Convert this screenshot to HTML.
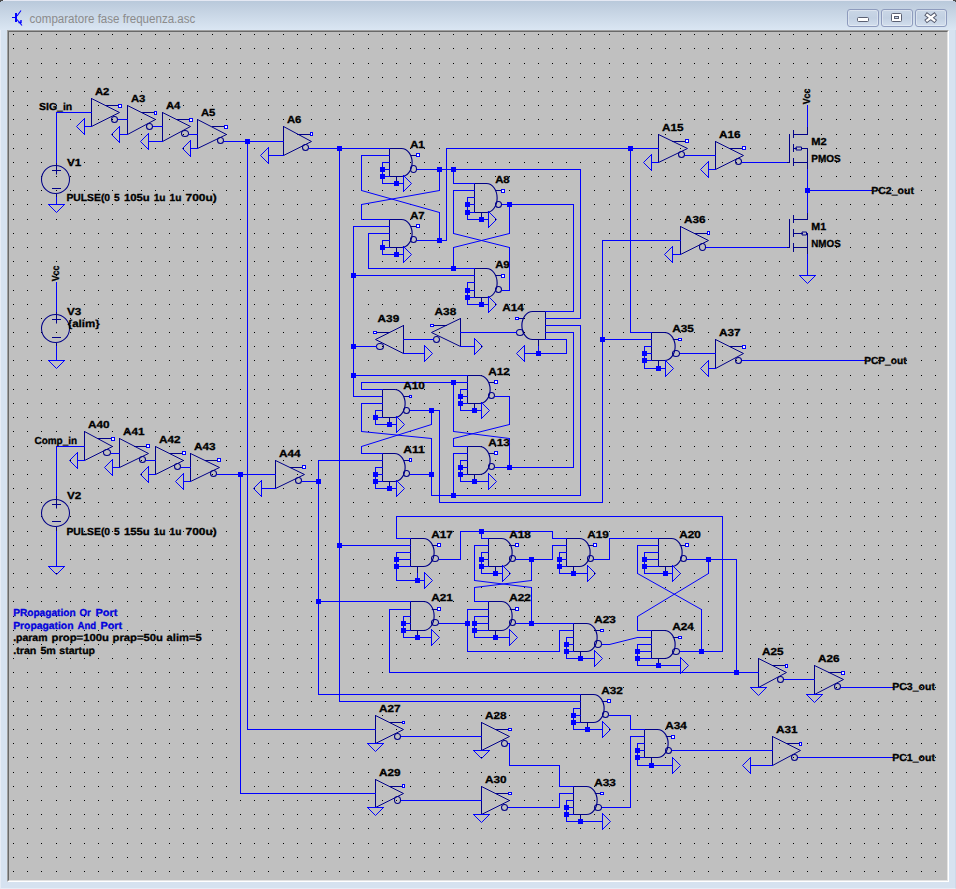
<!DOCTYPE html>
<html><head><meta charset="utf-8"><title>comparatore fase frequenza.asc</title>
<style>
html,body{margin:0;padding:0;background:#d7e3f1;}
body{width:956px;height:889px;position:relative;overflow:hidden;font-family:"Liberation Sans",sans-serif;}
#frame{position:absolute;left:0;top:0;width:956px;height:889px;background:#d6e2f0;box-sizing:border-box;border-left:1px solid #e6ecf6;border-bottom:1px solid #e6ecf6;border-right:1px solid #cdd9e9;}
#tbar{position:absolute;left:0;top:0;width:956px;height:30px;background:linear-gradient(#e4e8f3 0,#e4e8f3 1px,#b9c9db 1px,#c4d2e2 10px,#d9e5f2 29px,#dbe6f3 30px);}
#canvas{position:absolute;left:7px;top:30px;width:942px;height:852px;background:#c0c0c0;box-sizing:border-box;border-left:1px solid #a0a0a0;border-top:1px solid #a0a0a0;border-right:1px solid #fff;border-bottom:1px solid #fff;}
#canvas i{position:absolute;left:0;top:0;right:0;bottom:0;border-left:1px solid #696969;border-top:1px solid #696969;border-right:1px solid #e3e3e3;border-bottom:1px solid #e3e3e3;}
#title{position:absolute;left:29.6px;top:9px;font-size:12px;color:#8b8b8b;white-space:nowrap;line-height:17px;}
.btn{position:absolute;top:9px;width:32px;height:18px;box-sizing:border-box;border:1px solid #8e9bbd;border-radius:3px;background:linear-gradient(#c9d6e6,#c2d0e2 50%,#d2deed);box-shadow:inset 0 0 0 1px rgba(255,255,255,.35);}
</style></head><body>
<div id="frame"></div>
<div id="tbar"></div>
<div id="canvas"><i></i></div>
<div class="btn" style="left:847px"></div>
<div class="btn" style="left:881px"></div>
<div class="btn" style="left:915px"></div>
<svg width="956" height="889" viewBox="0 0 956 889" style="position:absolute;left:0;top:0">
<path d="M13 34h1M27 34h1M41 34h1M56 34h1M70 34h1M84 34h1M98 34h1M112 34h1M127 34h1M141 34h1M155 34h1M169 34h1M183 34h1M197 34h1M212 34h1M226 34h1M240 34h1M254 34h1M268 34h1M283 34h1M297 34h1M311 34h1M325 34h1M339 34h1M353 34h1M368 34h1M382 34h1M396 34h1M410 34h1M424 34h1M439 34h1M453 34h1M467 34h1M481 34h1M495 34h1M509 34h1M524 34h1M538 34h1M552 34h1M566 34h1M580 34h1M594 34h1M609 34h1M623 34h1M637 34h1M651 34h1M665 34h1M680 34h1M694 34h1M708 34h1M722 34h1M736 34h1M750 34h1M765 34h1M779 34h1M793 34h1M807 34h1M821 34h1M836 34h1M850 34h1M864 34h1M878 34h1M892 34h1M906 34h1M921 34h1M935 34h1M13 48h1M27 48h1M41 48h1M56 48h1M70 48h1M84 48h1M98 48h1M112 48h1M127 48h1M141 48h1M155 48h1M169 48h1M183 48h1M197 48h1M212 48h1M226 48h1M240 48h1M254 48h1M268 48h1M283 48h1M297 48h1M311 48h1M325 48h1M339 48h1M353 48h1M368 48h1M382 48h1M396 48h1M410 48h1M424 48h1M439 48h1M453 48h1M467 48h1M481 48h1M495 48h1M509 48h1M524 48h1M538 48h1M552 48h1M566 48h1M580 48h1M594 48h1M609 48h1M623 48h1M637 48h1M651 48h1M665 48h1M680 48h1M694 48h1M708 48h1M722 48h1M736 48h1M750 48h1M765 48h1M779 48h1M793 48h1M807 48h1M821 48h1M836 48h1M850 48h1M864 48h1M878 48h1M892 48h1M906 48h1M921 48h1M935 48h1M13 63h1M27 63h1M41 63h1M56 63h1M70 63h1M84 63h1M98 63h1M112 63h1M127 63h1M141 63h1M155 63h1M169 63h1M183 63h1M197 63h1M212 63h1M226 63h1M240 63h1M254 63h1M268 63h1M283 63h1M297 63h1M311 63h1M325 63h1M339 63h1M353 63h1M368 63h1M382 63h1M396 63h1M410 63h1M424 63h1M439 63h1M453 63h1M467 63h1M481 63h1M495 63h1M509 63h1M524 63h1M538 63h1M552 63h1M566 63h1M580 63h1M594 63h1M609 63h1M623 63h1M637 63h1M651 63h1M665 63h1M680 63h1M694 63h1M708 63h1M722 63h1M736 63h1M750 63h1M765 63h1M779 63h1M793 63h1M807 63h1M821 63h1M836 63h1M850 63h1M864 63h1M878 63h1M892 63h1M906 63h1M921 63h1M935 63h1M13 77h1M27 77h1M41 77h1M56 77h1M70 77h1M84 77h1M98 77h1M112 77h1M127 77h1M141 77h1M155 77h1M169 77h1M183 77h1M197 77h1M212 77h1M226 77h1M240 77h1M254 77h1M268 77h1M283 77h1M297 77h1M311 77h1M325 77h1M339 77h1M353 77h1M368 77h1M382 77h1M396 77h1M410 77h1M424 77h1M439 77h1M453 77h1M467 77h1M481 77h1M495 77h1M509 77h1M524 77h1M538 77h1M552 77h1M566 77h1M580 77h1M594 77h1M609 77h1M623 77h1M637 77h1M651 77h1M665 77h1M680 77h1M694 77h1M708 77h1M722 77h1M736 77h1M750 77h1M765 77h1M779 77h1M793 77h1M807 77h1M821 77h1M836 77h1M850 77h1M864 77h1M878 77h1M892 77h1M906 77h1M921 77h1M935 77h1M13 91h1M27 91h1M41 91h1M56 91h1M70 91h1M84 91h1M98 91h1M112 91h1M127 91h1M141 91h1M155 91h1M169 91h1M183 91h1M197 91h1M212 91h1M226 91h1M240 91h1M254 91h1M268 91h1M283 91h1M297 91h1M311 91h1M325 91h1M339 91h1M353 91h1M368 91h1M382 91h1M396 91h1M410 91h1M424 91h1M439 91h1M453 91h1M467 91h1M481 91h1M495 91h1M509 91h1M524 91h1M538 91h1M552 91h1M566 91h1M580 91h1M594 91h1M609 91h1M623 91h1M637 91h1M651 91h1M665 91h1M680 91h1M694 91h1M708 91h1M722 91h1M736 91h1M750 91h1M765 91h1M779 91h1M793 91h1M807 91h1M821 91h1M836 91h1M850 91h1M864 91h1M878 91h1M892 91h1M906 91h1M921 91h1M935 91h1M13 105h1M27 105h1M41 105h1M56 105h1M70 105h1M84 105h1M98 105h1M112 105h1M127 105h1M141 105h1M155 105h1M169 105h1M183 105h1M197 105h1M212 105h1M226 105h1M240 105h1M254 105h1M268 105h1M283 105h1M297 105h1M311 105h1M325 105h1M339 105h1M353 105h1M368 105h1M382 105h1M396 105h1M410 105h1M424 105h1M439 105h1M453 105h1M467 105h1M481 105h1M495 105h1M509 105h1M524 105h1M538 105h1M552 105h1M566 105h1M580 105h1M594 105h1M609 105h1M623 105h1M637 105h1M651 105h1M665 105h1M680 105h1M694 105h1M708 105h1M722 105h1M736 105h1M750 105h1M765 105h1M779 105h1M793 105h1M807 105h1M821 105h1M836 105h1M850 105h1M864 105h1M878 105h1M892 105h1M906 105h1M921 105h1M935 105h1M13 119h1M27 119h1M41 119h1M56 119h1M70 119h1M84 119h1M98 119h1M112 119h1M127 119h1M141 119h1M155 119h1M169 119h1M183 119h1M197 119h1M212 119h1M226 119h1M240 119h1M254 119h1M268 119h1M283 119h1M297 119h1M311 119h1M325 119h1M339 119h1M353 119h1M368 119h1M382 119h1M396 119h1M410 119h1M424 119h1M439 119h1M453 119h1M467 119h1M481 119h1M495 119h1M509 119h1M524 119h1M538 119h1M552 119h1M566 119h1M580 119h1M594 119h1M609 119h1M623 119h1M637 119h1M651 119h1M665 119h1M680 119h1M694 119h1M708 119h1M722 119h1M736 119h1M750 119h1M765 119h1M779 119h1M793 119h1M807 119h1M821 119h1M836 119h1M850 119h1M864 119h1M878 119h1M892 119h1M906 119h1M921 119h1M935 119h1M13 134h1M27 134h1M41 134h1M56 134h1M70 134h1M84 134h1M98 134h1M112 134h1M127 134h1M141 134h1M155 134h1M169 134h1M183 134h1M197 134h1M212 134h1M226 134h1M240 134h1M254 134h1M268 134h1M283 134h1M297 134h1M311 134h1M325 134h1M339 134h1M353 134h1M368 134h1M382 134h1M396 134h1M410 134h1M424 134h1M439 134h1M453 134h1M467 134h1M481 134h1M495 134h1M509 134h1M524 134h1M538 134h1M552 134h1M566 134h1M580 134h1M594 134h1M609 134h1M623 134h1M637 134h1M651 134h1M665 134h1M680 134h1M694 134h1M708 134h1M722 134h1M736 134h1M750 134h1M765 134h1M779 134h1M793 134h1M807 134h1M821 134h1M836 134h1M850 134h1M864 134h1M878 134h1M892 134h1M906 134h1M921 134h1M935 134h1M13 148h1M27 148h1M41 148h1M56 148h1M70 148h1M84 148h1M98 148h1M112 148h1M127 148h1M141 148h1M155 148h1M169 148h1M183 148h1M197 148h1M212 148h1M226 148h1M240 148h1M254 148h1M268 148h1M283 148h1M297 148h1M311 148h1M325 148h1M339 148h1M353 148h1M368 148h1M382 148h1M396 148h1M410 148h1M424 148h1M439 148h1M453 148h1M467 148h1M481 148h1M495 148h1M509 148h1M524 148h1M538 148h1M552 148h1M566 148h1M580 148h1M594 148h1M609 148h1M623 148h1M637 148h1M651 148h1M665 148h1M680 148h1M694 148h1M708 148h1M722 148h1M736 148h1M750 148h1M765 148h1M779 148h1M793 148h1M807 148h1M821 148h1M836 148h1M850 148h1M864 148h1M878 148h1M892 148h1M906 148h1M921 148h1M935 148h1M13 162h1M27 162h1M41 162h1M56 162h1M70 162h1M84 162h1M98 162h1M112 162h1M127 162h1M141 162h1M155 162h1M169 162h1M183 162h1M197 162h1M212 162h1M226 162h1M240 162h1M254 162h1M268 162h1M283 162h1M297 162h1M311 162h1M325 162h1M339 162h1M353 162h1M368 162h1M382 162h1M396 162h1M410 162h1M424 162h1M439 162h1M453 162h1M467 162h1M481 162h1M495 162h1M509 162h1M524 162h1M538 162h1M552 162h1M566 162h1M580 162h1M594 162h1M609 162h1M623 162h1M637 162h1M651 162h1M665 162h1M680 162h1M694 162h1M708 162h1M722 162h1M736 162h1M750 162h1M765 162h1M779 162h1M793 162h1M807 162h1M821 162h1M836 162h1M850 162h1M864 162h1M878 162h1M892 162h1M906 162h1M921 162h1M935 162h1M13 176h1M27 176h1M41 176h1M56 176h1M70 176h1M84 176h1M98 176h1M112 176h1M127 176h1M141 176h1M155 176h1M169 176h1M183 176h1M197 176h1M212 176h1M226 176h1M240 176h1M254 176h1M268 176h1M283 176h1M297 176h1M311 176h1M325 176h1M339 176h1M353 176h1M368 176h1M382 176h1M396 176h1M410 176h1M424 176h1M439 176h1M453 176h1M467 176h1M481 176h1M495 176h1M509 176h1M524 176h1M538 176h1M552 176h1M566 176h1M580 176h1M594 176h1M609 176h1M623 176h1M637 176h1M651 176h1M665 176h1M680 176h1M694 176h1M708 176h1M722 176h1M736 176h1M750 176h1M765 176h1M779 176h1M793 176h1M807 176h1M821 176h1M836 176h1M850 176h1M864 176h1M878 176h1M892 176h1M906 176h1M921 176h1M935 176h1M13 190h1M27 190h1M41 190h1M56 190h1M70 190h1M84 190h1M98 190h1M112 190h1M127 190h1M141 190h1M155 190h1M169 190h1M183 190h1M197 190h1M212 190h1M226 190h1M240 190h1M254 190h1M268 190h1M283 190h1M297 190h1M311 190h1M325 190h1M339 190h1M353 190h1M368 190h1M382 190h1M396 190h1M410 190h1M424 190h1M439 190h1M453 190h1M467 190h1M481 190h1M495 190h1M509 190h1M524 190h1M538 190h1M552 190h1M566 190h1M580 190h1M594 190h1M609 190h1M623 190h1M637 190h1M651 190h1M665 190h1M680 190h1M694 190h1M708 190h1M722 190h1M736 190h1M750 190h1M765 190h1M779 190h1M793 190h1M807 190h1M821 190h1M836 190h1M850 190h1M864 190h1M878 190h1M892 190h1M906 190h1M921 190h1M935 190h1M13 204h1M27 204h1M41 204h1M56 204h1M70 204h1M84 204h1M98 204h1M112 204h1M127 204h1M141 204h1M155 204h1M169 204h1M183 204h1M197 204h1M212 204h1M226 204h1M240 204h1M254 204h1M268 204h1M283 204h1M297 204h1M311 204h1M325 204h1M339 204h1M353 204h1M368 204h1M382 204h1M396 204h1M410 204h1M424 204h1M439 204h1M453 204h1M467 204h1M481 204h1M495 204h1M509 204h1M524 204h1M538 204h1M552 204h1M566 204h1M580 204h1M594 204h1M609 204h1M623 204h1M637 204h1M651 204h1M665 204h1M680 204h1M694 204h1M708 204h1M722 204h1M736 204h1M750 204h1M765 204h1M779 204h1M793 204h1M807 204h1M821 204h1M836 204h1M850 204h1M864 204h1M878 204h1M892 204h1M906 204h1M921 204h1M935 204h1M13 219h1M27 219h1M41 219h1M56 219h1M70 219h1M84 219h1M98 219h1M112 219h1M127 219h1M141 219h1M155 219h1M169 219h1M183 219h1M197 219h1M212 219h1M226 219h1M240 219h1M254 219h1M268 219h1M283 219h1M297 219h1M311 219h1M325 219h1M339 219h1M353 219h1M368 219h1M382 219h1M396 219h1M410 219h1M424 219h1M439 219h1M453 219h1M467 219h1M481 219h1M495 219h1M509 219h1M524 219h1M538 219h1M552 219h1M566 219h1M580 219h1M594 219h1M609 219h1M623 219h1M637 219h1M651 219h1M665 219h1M680 219h1M694 219h1M708 219h1M722 219h1M736 219h1M750 219h1M765 219h1M779 219h1M793 219h1M807 219h1M821 219h1M836 219h1M850 219h1M864 219h1M878 219h1M892 219h1M906 219h1M921 219h1M935 219h1M13 233h1M27 233h1M41 233h1M56 233h1M70 233h1M84 233h1M98 233h1M112 233h1M127 233h1M141 233h1M155 233h1M169 233h1M183 233h1M197 233h1M212 233h1M226 233h1M240 233h1M254 233h1M268 233h1M283 233h1M297 233h1M311 233h1M325 233h1M339 233h1M353 233h1M368 233h1M382 233h1M396 233h1M410 233h1M424 233h1M439 233h1M453 233h1M467 233h1M481 233h1M495 233h1M509 233h1M524 233h1M538 233h1M552 233h1M566 233h1M580 233h1M594 233h1M609 233h1M623 233h1M637 233h1M651 233h1M665 233h1M680 233h1M694 233h1M708 233h1M722 233h1M736 233h1M750 233h1M765 233h1M779 233h1M793 233h1M807 233h1M821 233h1M836 233h1M850 233h1M864 233h1M878 233h1M892 233h1M906 233h1M921 233h1M935 233h1M13 247h1M27 247h1M41 247h1M56 247h1M70 247h1M84 247h1M98 247h1M112 247h1M127 247h1M141 247h1M155 247h1M169 247h1M183 247h1M197 247h1M212 247h1M226 247h1M240 247h1M254 247h1M268 247h1M283 247h1M297 247h1M311 247h1M325 247h1M339 247h1M353 247h1M368 247h1M382 247h1M396 247h1M410 247h1M424 247h1M439 247h1M453 247h1M467 247h1M481 247h1M495 247h1M509 247h1M524 247h1M538 247h1M552 247h1M566 247h1M580 247h1M594 247h1M609 247h1M623 247h1M637 247h1M651 247h1M665 247h1M680 247h1M694 247h1M708 247h1M722 247h1M736 247h1M750 247h1M765 247h1M779 247h1M793 247h1M807 247h1M821 247h1M836 247h1M850 247h1M864 247h1M878 247h1M892 247h1M906 247h1M921 247h1M935 247h1M13 261h1M27 261h1M41 261h1M56 261h1M70 261h1M84 261h1M98 261h1M112 261h1M127 261h1M141 261h1M155 261h1M169 261h1M183 261h1M197 261h1M212 261h1M226 261h1M240 261h1M254 261h1M268 261h1M283 261h1M297 261h1M311 261h1M325 261h1M339 261h1M353 261h1M368 261h1M382 261h1M396 261h1M410 261h1M424 261h1M439 261h1M453 261h1M467 261h1M481 261h1M495 261h1M509 261h1M524 261h1M538 261h1M552 261h1M566 261h1M580 261h1M594 261h1M609 261h1M623 261h1M637 261h1M651 261h1M665 261h1M680 261h1M694 261h1M708 261h1M722 261h1M736 261h1M750 261h1M765 261h1M779 261h1M793 261h1M807 261h1M821 261h1M836 261h1M850 261h1M864 261h1M878 261h1M892 261h1M906 261h1M921 261h1M935 261h1M13 275h1M27 275h1M41 275h1M56 275h1M70 275h1M84 275h1M98 275h1M112 275h1M127 275h1M141 275h1M155 275h1M169 275h1M183 275h1M197 275h1M212 275h1M226 275h1M240 275h1M254 275h1M268 275h1M283 275h1M297 275h1M311 275h1M325 275h1M339 275h1M353 275h1M368 275h1M382 275h1M396 275h1M410 275h1M424 275h1M439 275h1M453 275h1M467 275h1M481 275h1M495 275h1M509 275h1M524 275h1M538 275h1M552 275h1M566 275h1M580 275h1M594 275h1M609 275h1M623 275h1M637 275h1M651 275h1M665 275h1M680 275h1M694 275h1M708 275h1M722 275h1M736 275h1M750 275h1M765 275h1M779 275h1M793 275h1M807 275h1M821 275h1M836 275h1M850 275h1M864 275h1M878 275h1M892 275h1M906 275h1M921 275h1M935 275h1M13 290h1M27 290h1M41 290h1M56 290h1M70 290h1M84 290h1M98 290h1M112 290h1M127 290h1M141 290h1M155 290h1M169 290h1M183 290h1M197 290h1M212 290h1M226 290h1M240 290h1M254 290h1M268 290h1M283 290h1M297 290h1M311 290h1M325 290h1M339 290h1M353 290h1M368 290h1M382 290h1M396 290h1M410 290h1M424 290h1M439 290h1M453 290h1M467 290h1M481 290h1M495 290h1M509 290h1M524 290h1M538 290h1M552 290h1M566 290h1M580 290h1M594 290h1M609 290h1M623 290h1M637 290h1M651 290h1M665 290h1M680 290h1M694 290h1M708 290h1M722 290h1M736 290h1M750 290h1M765 290h1M779 290h1M793 290h1M807 290h1M821 290h1M836 290h1M850 290h1M864 290h1M878 290h1M892 290h1M906 290h1M921 290h1M935 290h1M13 304h1M27 304h1M41 304h1M56 304h1M70 304h1M84 304h1M98 304h1M112 304h1M127 304h1M141 304h1M155 304h1M169 304h1M183 304h1M197 304h1M212 304h1M226 304h1M240 304h1M254 304h1M268 304h1M283 304h1M297 304h1M311 304h1M325 304h1M339 304h1M353 304h1M368 304h1M382 304h1M396 304h1M410 304h1M424 304h1M439 304h1M453 304h1M467 304h1M481 304h1M495 304h1M509 304h1M524 304h1M538 304h1M552 304h1M566 304h1M580 304h1M594 304h1M609 304h1M623 304h1M637 304h1M651 304h1M665 304h1M680 304h1M694 304h1M708 304h1M722 304h1M736 304h1M750 304h1M765 304h1M779 304h1M793 304h1M807 304h1M821 304h1M836 304h1M850 304h1M864 304h1M878 304h1M892 304h1M906 304h1M921 304h1M935 304h1M13 318h1M27 318h1M41 318h1M56 318h1M70 318h1M84 318h1M98 318h1M112 318h1M127 318h1M141 318h1M155 318h1M169 318h1M183 318h1M197 318h1M212 318h1M226 318h1M240 318h1M254 318h1M268 318h1M283 318h1M297 318h1M311 318h1M325 318h1M339 318h1M353 318h1M368 318h1M382 318h1M396 318h1M410 318h1M424 318h1M439 318h1M453 318h1M467 318h1M481 318h1M495 318h1M509 318h1M524 318h1M538 318h1M552 318h1M566 318h1M580 318h1M594 318h1M609 318h1M623 318h1M637 318h1M651 318h1M665 318h1M680 318h1M694 318h1M708 318h1M722 318h1M736 318h1M750 318h1M765 318h1M779 318h1M793 318h1M807 318h1M821 318h1M836 318h1M850 318h1M864 318h1M878 318h1M892 318h1M906 318h1M921 318h1M935 318h1M13 332h1M27 332h1M41 332h1M56 332h1M70 332h1M84 332h1M98 332h1M112 332h1M127 332h1M141 332h1M155 332h1M169 332h1M183 332h1M197 332h1M212 332h1M226 332h1M240 332h1M254 332h1M268 332h1M283 332h1M297 332h1M311 332h1M325 332h1M339 332h1M353 332h1M368 332h1M382 332h1M396 332h1M410 332h1M424 332h1M439 332h1M453 332h1M467 332h1M481 332h1M495 332h1M509 332h1M524 332h1M538 332h1M552 332h1M566 332h1M580 332h1M594 332h1M609 332h1M623 332h1M637 332h1M651 332h1M665 332h1M680 332h1M694 332h1M708 332h1M722 332h1M736 332h1M750 332h1M765 332h1M779 332h1M793 332h1M807 332h1M821 332h1M836 332h1M850 332h1M864 332h1M878 332h1M892 332h1M906 332h1M921 332h1M935 332h1M13 346h1M27 346h1M41 346h1M56 346h1M70 346h1M84 346h1M98 346h1M112 346h1M127 346h1M141 346h1M155 346h1M169 346h1M183 346h1M197 346h1M212 346h1M226 346h1M240 346h1M254 346h1M268 346h1M283 346h1M297 346h1M311 346h1M325 346h1M339 346h1M353 346h1M368 346h1M382 346h1M396 346h1M410 346h1M424 346h1M439 346h1M453 346h1M467 346h1M481 346h1M495 346h1M509 346h1M524 346h1M538 346h1M552 346h1M566 346h1M580 346h1M594 346h1M609 346h1M623 346h1M637 346h1M651 346h1M665 346h1M680 346h1M694 346h1M708 346h1M722 346h1M736 346h1M750 346h1M765 346h1M779 346h1M793 346h1M807 346h1M821 346h1M836 346h1M850 346h1M864 346h1M878 346h1M892 346h1M906 346h1M921 346h1M935 346h1M13 360h1M27 360h1M41 360h1M56 360h1M70 360h1M84 360h1M98 360h1M112 360h1M127 360h1M141 360h1M155 360h1M169 360h1M183 360h1M197 360h1M212 360h1M226 360h1M240 360h1M254 360h1M268 360h1M283 360h1M297 360h1M311 360h1M325 360h1M339 360h1M353 360h1M368 360h1M382 360h1M396 360h1M410 360h1M424 360h1M439 360h1M453 360h1M467 360h1M481 360h1M495 360h1M509 360h1M524 360h1M538 360h1M552 360h1M566 360h1M580 360h1M594 360h1M609 360h1M623 360h1M637 360h1M651 360h1M665 360h1M680 360h1M694 360h1M708 360h1M722 360h1M736 360h1M750 360h1M765 360h1M779 360h1M793 360h1M807 360h1M821 360h1M836 360h1M850 360h1M864 360h1M878 360h1M892 360h1M906 360h1M921 360h1M935 360h1M13 375h1M27 375h1M41 375h1M56 375h1M70 375h1M84 375h1M98 375h1M112 375h1M127 375h1M141 375h1M155 375h1M169 375h1M183 375h1M197 375h1M212 375h1M226 375h1M240 375h1M254 375h1M268 375h1M283 375h1M297 375h1M311 375h1M325 375h1M339 375h1M353 375h1M368 375h1M382 375h1M396 375h1M410 375h1M424 375h1M439 375h1M453 375h1M467 375h1M481 375h1M495 375h1M509 375h1M524 375h1M538 375h1M552 375h1M566 375h1M580 375h1M594 375h1M609 375h1M623 375h1M637 375h1M651 375h1M665 375h1M680 375h1M694 375h1M708 375h1M722 375h1M736 375h1M750 375h1M765 375h1M779 375h1M793 375h1M807 375h1M821 375h1M836 375h1M850 375h1M864 375h1M878 375h1M892 375h1M906 375h1M921 375h1M935 375h1M13 389h1M27 389h1M41 389h1M56 389h1M70 389h1M84 389h1M98 389h1M112 389h1M127 389h1M141 389h1M155 389h1M169 389h1M183 389h1M197 389h1M212 389h1M226 389h1M240 389h1M254 389h1M268 389h1M283 389h1M297 389h1M311 389h1M325 389h1M339 389h1M353 389h1M368 389h1M382 389h1M396 389h1M410 389h1M424 389h1M439 389h1M453 389h1M467 389h1M481 389h1M495 389h1M509 389h1M524 389h1M538 389h1M552 389h1M566 389h1M580 389h1M594 389h1M609 389h1M623 389h1M637 389h1M651 389h1M665 389h1M680 389h1M694 389h1M708 389h1M722 389h1M736 389h1M750 389h1M765 389h1M779 389h1M793 389h1M807 389h1M821 389h1M836 389h1M850 389h1M864 389h1M878 389h1M892 389h1M906 389h1M921 389h1M935 389h1M13 403h1M27 403h1M41 403h1M56 403h1M70 403h1M84 403h1M98 403h1M112 403h1M127 403h1M141 403h1M155 403h1M169 403h1M183 403h1M197 403h1M212 403h1M226 403h1M240 403h1M254 403h1M268 403h1M283 403h1M297 403h1M311 403h1M325 403h1M339 403h1M353 403h1M368 403h1M382 403h1M396 403h1M410 403h1M424 403h1M439 403h1M453 403h1M467 403h1M481 403h1M495 403h1M509 403h1M524 403h1M538 403h1M552 403h1M566 403h1M580 403h1M594 403h1M609 403h1M623 403h1M637 403h1M651 403h1M665 403h1M680 403h1M694 403h1M708 403h1M722 403h1M736 403h1M750 403h1M765 403h1M779 403h1M793 403h1M807 403h1M821 403h1M836 403h1M850 403h1M864 403h1M878 403h1M892 403h1M906 403h1M921 403h1M935 403h1M13 417h1M27 417h1M41 417h1M56 417h1M70 417h1M84 417h1M98 417h1M112 417h1M127 417h1M141 417h1M155 417h1M169 417h1M183 417h1M197 417h1M212 417h1M226 417h1M240 417h1M254 417h1M268 417h1M283 417h1M297 417h1M311 417h1M325 417h1M339 417h1M353 417h1M368 417h1M382 417h1M396 417h1M410 417h1M424 417h1M439 417h1M453 417h1M467 417h1M481 417h1M495 417h1M509 417h1M524 417h1M538 417h1M552 417h1M566 417h1M580 417h1M594 417h1M609 417h1M623 417h1M637 417h1M651 417h1M665 417h1M680 417h1M694 417h1M708 417h1M722 417h1M736 417h1M750 417h1M765 417h1M779 417h1M793 417h1M807 417h1M821 417h1M836 417h1M850 417h1M864 417h1M878 417h1M892 417h1M906 417h1M921 417h1M935 417h1M13 431h1M27 431h1M41 431h1M56 431h1M70 431h1M84 431h1M98 431h1M112 431h1M127 431h1M141 431h1M155 431h1M169 431h1M183 431h1M197 431h1M212 431h1M226 431h1M240 431h1M254 431h1M268 431h1M283 431h1M297 431h1M311 431h1M325 431h1M339 431h1M353 431h1M368 431h1M382 431h1M396 431h1M410 431h1M424 431h1M439 431h1M453 431h1M467 431h1M481 431h1M495 431h1M509 431h1M524 431h1M538 431h1M552 431h1M566 431h1M580 431h1M594 431h1M609 431h1M623 431h1M637 431h1M651 431h1M665 431h1M680 431h1M694 431h1M708 431h1M722 431h1M736 431h1M750 431h1M765 431h1M779 431h1M793 431h1M807 431h1M821 431h1M836 431h1M850 431h1M864 431h1M878 431h1M892 431h1M906 431h1M921 431h1M935 431h1M13 446h1M27 446h1M41 446h1M56 446h1M70 446h1M84 446h1M98 446h1M112 446h1M127 446h1M141 446h1M155 446h1M169 446h1M183 446h1M197 446h1M212 446h1M226 446h1M240 446h1M254 446h1M268 446h1M283 446h1M297 446h1M311 446h1M325 446h1M339 446h1M353 446h1M368 446h1M382 446h1M396 446h1M410 446h1M424 446h1M439 446h1M453 446h1M467 446h1M481 446h1M495 446h1M509 446h1M524 446h1M538 446h1M552 446h1M566 446h1M580 446h1M594 446h1M609 446h1M623 446h1M637 446h1M651 446h1M665 446h1M680 446h1M694 446h1M708 446h1M722 446h1M736 446h1M750 446h1M765 446h1M779 446h1M793 446h1M807 446h1M821 446h1M836 446h1M850 446h1M864 446h1M878 446h1M892 446h1M906 446h1M921 446h1M935 446h1M13 460h1M27 460h1M41 460h1M56 460h1M70 460h1M84 460h1M98 460h1M112 460h1M127 460h1M141 460h1M155 460h1M169 460h1M183 460h1M197 460h1M212 460h1M226 460h1M240 460h1M254 460h1M268 460h1M283 460h1M297 460h1M311 460h1M325 460h1M339 460h1M353 460h1M368 460h1M382 460h1M396 460h1M410 460h1M424 460h1M439 460h1M453 460h1M467 460h1M481 460h1M495 460h1M509 460h1M524 460h1M538 460h1M552 460h1M566 460h1M580 460h1M594 460h1M609 460h1M623 460h1M637 460h1M651 460h1M665 460h1M680 460h1M694 460h1M708 460h1M722 460h1M736 460h1M750 460h1M765 460h1M779 460h1M793 460h1M807 460h1M821 460h1M836 460h1M850 460h1M864 460h1M878 460h1M892 460h1M906 460h1M921 460h1M935 460h1M13 474h1M27 474h1M41 474h1M56 474h1M70 474h1M84 474h1M98 474h1M112 474h1M127 474h1M141 474h1M155 474h1M169 474h1M183 474h1M197 474h1M212 474h1M226 474h1M240 474h1M254 474h1M268 474h1M283 474h1M297 474h1M311 474h1M325 474h1M339 474h1M353 474h1M368 474h1M382 474h1M396 474h1M410 474h1M424 474h1M439 474h1M453 474h1M467 474h1M481 474h1M495 474h1M509 474h1M524 474h1M538 474h1M552 474h1M566 474h1M580 474h1M594 474h1M609 474h1M623 474h1M637 474h1M651 474h1M665 474h1M680 474h1M694 474h1M708 474h1M722 474h1M736 474h1M750 474h1M765 474h1M779 474h1M793 474h1M807 474h1M821 474h1M836 474h1M850 474h1M864 474h1M878 474h1M892 474h1M906 474h1M921 474h1M935 474h1M13 488h1M27 488h1M41 488h1M56 488h1M70 488h1M84 488h1M98 488h1M112 488h1M127 488h1M141 488h1M155 488h1M169 488h1M183 488h1M197 488h1M212 488h1M226 488h1M240 488h1M254 488h1M268 488h1M283 488h1M297 488h1M311 488h1M325 488h1M339 488h1M353 488h1M368 488h1M382 488h1M396 488h1M410 488h1M424 488h1M439 488h1M453 488h1M467 488h1M481 488h1M495 488h1M509 488h1M524 488h1M538 488h1M552 488h1M566 488h1M580 488h1M594 488h1M609 488h1M623 488h1M637 488h1M651 488h1M665 488h1M680 488h1M694 488h1M708 488h1M722 488h1M736 488h1M750 488h1M765 488h1M779 488h1M793 488h1M807 488h1M821 488h1M836 488h1M850 488h1M864 488h1M878 488h1M892 488h1M906 488h1M921 488h1M935 488h1M13 502h1M27 502h1M41 502h1M56 502h1M70 502h1M84 502h1M98 502h1M112 502h1M127 502h1M141 502h1M155 502h1M169 502h1M183 502h1M197 502h1M212 502h1M226 502h1M240 502h1M254 502h1M268 502h1M283 502h1M297 502h1M311 502h1M325 502h1M339 502h1M353 502h1M368 502h1M382 502h1M396 502h1M410 502h1M424 502h1M439 502h1M453 502h1M467 502h1M481 502h1M495 502h1M509 502h1M524 502h1M538 502h1M552 502h1M566 502h1M580 502h1M594 502h1M609 502h1M623 502h1M637 502h1M651 502h1M665 502h1M680 502h1M694 502h1M708 502h1M722 502h1M736 502h1M750 502h1M765 502h1M779 502h1M793 502h1M807 502h1M821 502h1M836 502h1M850 502h1M864 502h1M878 502h1M892 502h1M906 502h1M921 502h1M935 502h1M13 516h1M27 516h1M41 516h1M56 516h1M70 516h1M84 516h1M98 516h1M112 516h1M127 516h1M141 516h1M155 516h1M169 516h1M183 516h1M197 516h1M212 516h1M226 516h1M240 516h1M254 516h1M268 516h1M283 516h1M297 516h1M311 516h1M325 516h1M339 516h1M353 516h1M368 516h1M382 516h1M396 516h1M410 516h1M424 516h1M439 516h1M453 516h1M467 516h1M481 516h1M495 516h1M509 516h1M524 516h1M538 516h1M552 516h1M566 516h1M580 516h1M594 516h1M609 516h1M623 516h1M637 516h1M651 516h1M665 516h1M680 516h1M694 516h1M708 516h1M722 516h1M736 516h1M750 516h1M765 516h1M779 516h1M793 516h1M807 516h1M821 516h1M836 516h1M850 516h1M864 516h1M878 516h1M892 516h1M906 516h1M921 516h1M935 516h1M13 531h1M27 531h1M41 531h1M56 531h1M70 531h1M84 531h1M98 531h1M112 531h1M127 531h1M141 531h1M155 531h1M169 531h1M183 531h1M197 531h1M212 531h1M226 531h1M240 531h1M254 531h1M268 531h1M283 531h1M297 531h1M311 531h1M325 531h1M339 531h1M353 531h1M368 531h1M382 531h1M396 531h1M410 531h1M424 531h1M439 531h1M453 531h1M467 531h1M481 531h1M495 531h1M509 531h1M524 531h1M538 531h1M552 531h1M566 531h1M580 531h1M594 531h1M609 531h1M623 531h1M637 531h1M651 531h1M665 531h1M680 531h1M694 531h1M708 531h1M722 531h1M736 531h1M750 531h1M765 531h1M779 531h1M793 531h1M807 531h1M821 531h1M836 531h1M850 531h1M864 531h1M878 531h1M892 531h1M906 531h1M921 531h1M935 531h1M13 545h1M27 545h1M41 545h1M56 545h1M70 545h1M84 545h1M98 545h1M112 545h1M127 545h1M141 545h1M155 545h1M169 545h1M183 545h1M197 545h1M212 545h1M226 545h1M240 545h1M254 545h1M268 545h1M283 545h1M297 545h1M311 545h1M325 545h1M339 545h1M353 545h1M368 545h1M382 545h1M396 545h1M410 545h1M424 545h1M439 545h1M453 545h1M467 545h1M481 545h1M495 545h1M509 545h1M524 545h1M538 545h1M552 545h1M566 545h1M580 545h1M594 545h1M609 545h1M623 545h1M637 545h1M651 545h1M665 545h1M680 545h1M694 545h1M708 545h1M722 545h1M736 545h1M750 545h1M765 545h1M779 545h1M793 545h1M807 545h1M821 545h1M836 545h1M850 545h1M864 545h1M878 545h1M892 545h1M906 545h1M921 545h1M935 545h1M13 559h1M27 559h1M41 559h1M56 559h1M70 559h1M84 559h1M98 559h1M112 559h1M127 559h1M141 559h1M155 559h1M169 559h1M183 559h1M197 559h1M212 559h1M226 559h1M240 559h1M254 559h1M268 559h1M283 559h1M297 559h1M311 559h1M325 559h1M339 559h1M353 559h1M368 559h1M382 559h1M396 559h1M410 559h1M424 559h1M439 559h1M453 559h1M467 559h1M481 559h1M495 559h1M509 559h1M524 559h1M538 559h1M552 559h1M566 559h1M580 559h1M594 559h1M609 559h1M623 559h1M637 559h1M651 559h1M665 559h1M680 559h1M694 559h1M708 559h1M722 559h1M736 559h1M750 559h1M765 559h1M779 559h1M793 559h1M807 559h1M821 559h1M836 559h1M850 559h1M864 559h1M878 559h1M892 559h1M906 559h1M921 559h1M935 559h1M13 573h1M27 573h1M41 573h1M56 573h1M70 573h1M84 573h1M98 573h1M112 573h1M127 573h1M141 573h1M155 573h1M169 573h1M183 573h1M197 573h1M212 573h1M226 573h1M240 573h1M254 573h1M268 573h1M283 573h1M297 573h1M311 573h1M325 573h1M339 573h1M353 573h1M368 573h1M382 573h1M396 573h1M410 573h1M424 573h1M439 573h1M453 573h1M467 573h1M481 573h1M495 573h1M509 573h1M524 573h1M538 573h1M552 573h1M566 573h1M580 573h1M594 573h1M609 573h1M623 573h1M637 573h1M651 573h1M665 573h1M680 573h1M694 573h1M708 573h1M722 573h1M736 573h1M750 573h1M765 573h1M779 573h1M793 573h1M807 573h1M821 573h1M836 573h1M850 573h1M864 573h1M878 573h1M892 573h1M906 573h1M921 573h1M935 573h1M13 587h1M27 587h1M41 587h1M56 587h1M70 587h1M84 587h1M98 587h1M112 587h1M127 587h1M141 587h1M155 587h1M169 587h1M183 587h1M197 587h1M212 587h1M226 587h1M240 587h1M254 587h1M268 587h1M283 587h1M297 587h1M311 587h1M325 587h1M339 587h1M353 587h1M368 587h1M382 587h1M396 587h1M410 587h1M424 587h1M439 587h1M453 587h1M467 587h1M481 587h1M495 587h1M509 587h1M524 587h1M538 587h1M552 587h1M566 587h1M580 587h1M594 587h1M609 587h1M623 587h1M637 587h1M651 587h1M665 587h1M680 587h1M694 587h1M708 587h1M722 587h1M736 587h1M750 587h1M765 587h1M779 587h1M793 587h1M807 587h1M821 587h1M836 587h1M850 587h1M864 587h1M878 587h1M892 587h1M906 587h1M921 587h1M935 587h1M13 601h1M27 601h1M41 601h1M56 601h1M70 601h1M84 601h1M98 601h1M112 601h1M127 601h1M141 601h1M155 601h1M169 601h1M183 601h1M197 601h1M212 601h1M226 601h1M240 601h1M254 601h1M268 601h1M283 601h1M297 601h1M311 601h1M325 601h1M339 601h1M353 601h1M368 601h1M382 601h1M396 601h1M410 601h1M424 601h1M439 601h1M453 601h1M467 601h1M481 601h1M495 601h1M509 601h1M524 601h1M538 601h1M552 601h1M566 601h1M580 601h1M594 601h1M609 601h1M623 601h1M637 601h1M651 601h1M665 601h1M680 601h1M694 601h1M708 601h1M722 601h1M736 601h1M750 601h1M765 601h1M779 601h1M793 601h1M807 601h1M821 601h1M836 601h1M850 601h1M864 601h1M878 601h1M892 601h1M906 601h1M921 601h1M935 601h1M13 616h1M27 616h1M41 616h1M56 616h1M70 616h1M84 616h1M98 616h1M112 616h1M127 616h1M141 616h1M155 616h1M169 616h1M183 616h1M197 616h1M212 616h1M226 616h1M240 616h1M254 616h1M268 616h1M283 616h1M297 616h1M311 616h1M325 616h1M339 616h1M353 616h1M368 616h1M382 616h1M396 616h1M410 616h1M424 616h1M439 616h1M453 616h1M467 616h1M481 616h1M495 616h1M509 616h1M524 616h1M538 616h1M552 616h1M566 616h1M580 616h1M594 616h1M609 616h1M623 616h1M637 616h1M651 616h1M665 616h1M680 616h1M694 616h1M708 616h1M722 616h1M736 616h1M750 616h1M765 616h1M779 616h1M793 616h1M807 616h1M821 616h1M836 616h1M850 616h1M864 616h1M878 616h1M892 616h1M906 616h1M921 616h1M935 616h1M13 630h1M27 630h1M41 630h1M56 630h1M70 630h1M84 630h1M98 630h1M112 630h1M127 630h1M141 630h1M155 630h1M169 630h1M183 630h1M197 630h1M212 630h1M226 630h1M240 630h1M254 630h1M268 630h1M283 630h1M297 630h1M311 630h1M325 630h1M339 630h1M353 630h1M368 630h1M382 630h1M396 630h1M410 630h1M424 630h1M439 630h1M453 630h1M467 630h1M481 630h1M495 630h1M509 630h1M524 630h1M538 630h1M552 630h1M566 630h1M580 630h1M594 630h1M609 630h1M623 630h1M637 630h1M651 630h1M665 630h1M680 630h1M694 630h1M708 630h1M722 630h1M736 630h1M750 630h1M765 630h1M779 630h1M793 630h1M807 630h1M821 630h1M836 630h1M850 630h1M864 630h1M878 630h1M892 630h1M906 630h1M921 630h1M935 630h1M13 644h1M27 644h1M41 644h1M56 644h1M70 644h1M84 644h1M98 644h1M112 644h1M127 644h1M141 644h1M155 644h1M169 644h1M183 644h1M197 644h1M212 644h1M226 644h1M240 644h1M254 644h1M268 644h1M283 644h1M297 644h1M311 644h1M325 644h1M339 644h1M353 644h1M368 644h1M382 644h1M396 644h1M410 644h1M424 644h1M439 644h1M453 644h1M467 644h1M481 644h1M495 644h1M509 644h1M524 644h1M538 644h1M552 644h1M566 644h1M580 644h1M594 644h1M609 644h1M623 644h1M637 644h1M651 644h1M665 644h1M680 644h1M694 644h1M708 644h1M722 644h1M736 644h1M750 644h1M765 644h1M779 644h1M793 644h1M807 644h1M821 644h1M836 644h1M850 644h1M864 644h1M878 644h1M892 644h1M906 644h1M921 644h1M935 644h1M13 658h1M27 658h1M41 658h1M56 658h1M70 658h1M84 658h1M98 658h1M112 658h1M127 658h1M141 658h1M155 658h1M169 658h1M183 658h1M197 658h1M212 658h1M226 658h1M240 658h1M254 658h1M268 658h1M283 658h1M297 658h1M311 658h1M325 658h1M339 658h1M353 658h1M368 658h1M382 658h1M396 658h1M410 658h1M424 658h1M439 658h1M453 658h1M467 658h1M481 658h1M495 658h1M509 658h1M524 658h1M538 658h1M552 658h1M566 658h1M580 658h1M594 658h1M609 658h1M623 658h1M637 658h1M651 658h1M665 658h1M680 658h1M694 658h1M708 658h1M722 658h1M736 658h1M750 658h1M765 658h1M779 658h1M793 658h1M807 658h1M821 658h1M836 658h1M850 658h1M864 658h1M878 658h1M892 658h1M906 658h1M921 658h1M935 658h1M13 672h1M27 672h1M41 672h1M56 672h1M70 672h1M84 672h1M98 672h1M112 672h1M127 672h1M141 672h1M155 672h1M169 672h1M183 672h1M197 672h1M212 672h1M226 672h1M240 672h1M254 672h1M268 672h1M283 672h1M297 672h1M311 672h1M325 672h1M339 672h1M353 672h1M368 672h1M382 672h1M396 672h1M410 672h1M424 672h1M439 672h1M453 672h1M467 672h1M481 672h1M495 672h1M509 672h1M524 672h1M538 672h1M552 672h1M566 672h1M580 672h1M594 672h1M609 672h1M623 672h1M637 672h1M651 672h1M665 672h1M680 672h1M694 672h1M708 672h1M722 672h1M736 672h1M750 672h1M765 672h1M779 672h1M793 672h1M807 672h1M821 672h1M836 672h1M850 672h1M864 672h1M878 672h1M892 672h1M906 672h1M921 672h1M935 672h1M13 687h1M27 687h1M41 687h1M56 687h1M70 687h1M84 687h1M98 687h1M112 687h1M127 687h1M141 687h1M155 687h1M169 687h1M183 687h1M197 687h1M212 687h1M226 687h1M240 687h1M254 687h1M268 687h1M283 687h1M297 687h1M311 687h1M325 687h1M339 687h1M353 687h1M368 687h1M382 687h1M396 687h1M410 687h1M424 687h1M439 687h1M453 687h1M467 687h1M481 687h1M495 687h1M509 687h1M524 687h1M538 687h1M552 687h1M566 687h1M580 687h1M594 687h1M609 687h1M623 687h1M637 687h1M651 687h1M665 687h1M680 687h1M694 687h1M708 687h1M722 687h1M736 687h1M750 687h1M765 687h1M779 687h1M793 687h1M807 687h1M821 687h1M836 687h1M850 687h1M864 687h1M878 687h1M892 687h1M906 687h1M921 687h1M935 687h1M13 701h1M27 701h1M41 701h1M56 701h1M70 701h1M84 701h1M98 701h1M112 701h1M127 701h1M141 701h1M155 701h1M169 701h1M183 701h1M197 701h1M212 701h1M226 701h1M240 701h1M254 701h1M268 701h1M283 701h1M297 701h1M311 701h1M325 701h1M339 701h1M353 701h1M368 701h1M382 701h1M396 701h1M410 701h1M424 701h1M439 701h1M453 701h1M467 701h1M481 701h1M495 701h1M509 701h1M524 701h1M538 701h1M552 701h1M566 701h1M580 701h1M594 701h1M609 701h1M623 701h1M637 701h1M651 701h1M665 701h1M680 701h1M694 701h1M708 701h1M722 701h1M736 701h1M750 701h1M765 701h1M779 701h1M793 701h1M807 701h1M821 701h1M836 701h1M850 701h1M864 701h1M878 701h1M892 701h1M906 701h1M921 701h1M935 701h1M13 715h1M27 715h1M41 715h1M56 715h1M70 715h1M84 715h1M98 715h1M112 715h1M127 715h1M141 715h1M155 715h1M169 715h1M183 715h1M197 715h1M212 715h1M226 715h1M240 715h1M254 715h1M268 715h1M283 715h1M297 715h1M311 715h1M325 715h1M339 715h1M353 715h1M368 715h1M382 715h1M396 715h1M410 715h1M424 715h1M439 715h1M453 715h1M467 715h1M481 715h1M495 715h1M509 715h1M524 715h1M538 715h1M552 715h1M566 715h1M580 715h1M594 715h1M609 715h1M623 715h1M637 715h1M651 715h1M665 715h1M680 715h1M694 715h1M708 715h1M722 715h1M736 715h1M750 715h1M765 715h1M779 715h1M793 715h1M807 715h1M821 715h1M836 715h1M850 715h1M864 715h1M878 715h1M892 715h1M906 715h1M921 715h1M935 715h1M13 729h1M27 729h1M41 729h1M56 729h1M70 729h1M84 729h1M98 729h1M112 729h1M127 729h1M141 729h1M155 729h1M169 729h1M183 729h1M197 729h1M212 729h1M226 729h1M240 729h1M254 729h1M268 729h1M283 729h1M297 729h1M311 729h1M325 729h1M339 729h1M353 729h1M368 729h1M382 729h1M396 729h1M410 729h1M424 729h1M439 729h1M453 729h1M467 729h1M481 729h1M495 729h1M509 729h1M524 729h1M538 729h1M552 729h1M566 729h1M580 729h1M594 729h1M609 729h1M623 729h1M637 729h1M651 729h1M665 729h1M680 729h1M694 729h1M708 729h1M722 729h1M736 729h1M750 729h1M765 729h1M779 729h1M793 729h1M807 729h1M821 729h1M836 729h1M850 729h1M864 729h1M878 729h1M892 729h1M906 729h1M921 729h1M935 729h1M13 743h1M27 743h1M41 743h1M56 743h1M70 743h1M84 743h1M98 743h1M112 743h1M127 743h1M141 743h1M155 743h1M169 743h1M183 743h1M197 743h1M212 743h1M226 743h1M240 743h1M254 743h1M268 743h1M283 743h1M297 743h1M311 743h1M325 743h1M339 743h1M353 743h1M368 743h1M382 743h1M396 743h1M410 743h1M424 743h1M439 743h1M453 743h1M467 743h1M481 743h1M495 743h1M509 743h1M524 743h1M538 743h1M552 743h1M566 743h1M580 743h1M594 743h1M609 743h1M623 743h1M637 743h1M651 743h1M665 743h1M680 743h1M694 743h1M708 743h1M722 743h1M736 743h1M750 743h1M765 743h1M779 743h1M793 743h1M807 743h1M821 743h1M836 743h1M850 743h1M864 743h1M878 743h1M892 743h1M906 743h1M921 743h1M935 743h1M13 757h1M27 757h1M41 757h1M56 757h1M70 757h1M84 757h1M98 757h1M112 757h1M127 757h1M141 757h1M155 757h1M169 757h1M183 757h1M197 757h1M212 757h1M226 757h1M240 757h1M254 757h1M268 757h1M283 757h1M297 757h1M311 757h1M325 757h1M339 757h1M353 757h1M368 757h1M382 757h1M396 757h1M410 757h1M424 757h1M439 757h1M453 757h1M467 757h1M481 757h1M495 757h1M509 757h1M524 757h1M538 757h1M552 757h1M566 757h1M580 757h1M594 757h1M609 757h1M623 757h1M637 757h1M651 757h1M665 757h1M680 757h1M694 757h1M708 757h1M722 757h1M736 757h1M750 757h1M765 757h1M779 757h1M793 757h1M807 757h1M821 757h1M836 757h1M850 757h1M864 757h1M878 757h1M892 757h1M906 757h1M921 757h1M935 757h1M13 772h1M27 772h1M41 772h1M56 772h1M70 772h1M84 772h1M98 772h1M112 772h1M127 772h1M141 772h1M155 772h1M169 772h1M183 772h1M197 772h1M212 772h1M226 772h1M240 772h1M254 772h1M268 772h1M283 772h1M297 772h1M311 772h1M325 772h1M339 772h1M353 772h1M368 772h1M382 772h1M396 772h1M410 772h1M424 772h1M439 772h1M453 772h1M467 772h1M481 772h1M495 772h1M509 772h1M524 772h1M538 772h1M552 772h1M566 772h1M580 772h1M594 772h1M609 772h1M623 772h1M637 772h1M651 772h1M665 772h1M680 772h1M694 772h1M708 772h1M722 772h1M736 772h1M750 772h1M765 772h1M779 772h1M793 772h1M807 772h1M821 772h1M836 772h1M850 772h1M864 772h1M878 772h1M892 772h1M906 772h1M921 772h1M935 772h1M13 786h1M27 786h1M41 786h1M56 786h1M70 786h1M84 786h1M98 786h1M112 786h1M127 786h1M141 786h1M155 786h1M169 786h1M183 786h1M197 786h1M212 786h1M226 786h1M240 786h1M254 786h1M268 786h1M283 786h1M297 786h1M311 786h1M325 786h1M339 786h1M353 786h1M368 786h1M382 786h1M396 786h1M410 786h1M424 786h1M439 786h1M453 786h1M467 786h1M481 786h1M495 786h1M509 786h1M524 786h1M538 786h1M552 786h1M566 786h1M580 786h1M594 786h1M609 786h1M623 786h1M637 786h1M651 786h1M665 786h1M680 786h1M694 786h1M708 786h1M722 786h1M736 786h1M750 786h1M765 786h1M779 786h1M793 786h1M807 786h1M821 786h1M836 786h1M850 786h1M864 786h1M878 786h1M892 786h1M906 786h1M921 786h1M935 786h1M13 800h1M27 800h1M41 800h1M56 800h1M70 800h1M84 800h1M98 800h1M112 800h1M127 800h1M141 800h1M155 800h1M169 800h1M183 800h1M197 800h1M212 800h1M226 800h1M240 800h1M254 800h1M268 800h1M283 800h1M297 800h1M311 800h1M325 800h1M339 800h1M353 800h1M368 800h1M382 800h1M396 800h1M410 800h1M424 800h1M439 800h1M453 800h1M467 800h1M481 800h1M495 800h1M509 800h1M524 800h1M538 800h1M552 800h1M566 800h1M580 800h1M594 800h1M609 800h1M623 800h1M637 800h1M651 800h1M665 800h1M680 800h1M694 800h1M708 800h1M722 800h1M736 800h1M750 800h1M765 800h1M779 800h1M793 800h1M807 800h1M821 800h1M836 800h1M850 800h1M864 800h1M878 800h1M892 800h1M906 800h1M921 800h1M935 800h1M13 814h1M27 814h1M41 814h1M56 814h1M70 814h1M84 814h1M98 814h1M112 814h1M127 814h1M141 814h1M155 814h1M169 814h1M183 814h1M197 814h1M212 814h1M226 814h1M240 814h1M254 814h1M268 814h1M283 814h1M297 814h1M311 814h1M325 814h1M339 814h1M353 814h1M368 814h1M382 814h1M396 814h1M410 814h1M424 814h1M439 814h1M453 814h1M467 814h1M481 814h1M495 814h1M509 814h1M524 814h1M538 814h1M552 814h1M566 814h1M580 814h1M594 814h1M609 814h1M623 814h1M637 814h1M651 814h1M665 814h1M680 814h1M694 814h1M708 814h1M722 814h1M736 814h1M750 814h1M765 814h1M779 814h1M793 814h1M807 814h1M821 814h1M836 814h1M850 814h1M864 814h1M878 814h1M892 814h1M906 814h1M921 814h1M935 814h1M13 828h1M27 828h1M41 828h1M56 828h1M70 828h1M84 828h1M98 828h1M112 828h1M127 828h1M141 828h1M155 828h1M169 828h1M183 828h1M197 828h1M212 828h1M226 828h1M240 828h1M254 828h1M268 828h1M283 828h1M297 828h1M311 828h1M325 828h1M339 828h1M353 828h1M368 828h1M382 828h1M396 828h1M410 828h1M424 828h1M439 828h1M453 828h1M467 828h1M481 828h1M495 828h1M509 828h1M524 828h1M538 828h1M552 828h1M566 828h1M580 828h1M594 828h1M609 828h1M623 828h1M637 828h1M651 828h1M665 828h1M680 828h1M694 828h1M708 828h1M722 828h1M736 828h1M750 828h1M765 828h1M779 828h1M793 828h1M807 828h1M821 828h1M836 828h1M850 828h1M864 828h1M878 828h1M892 828h1M906 828h1M921 828h1M935 828h1M13 843h1M27 843h1M41 843h1M56 843h1M70 843h1M84 843h1M98 843h1M112 843h1M127 843h1M141 843h1M155 843h1M169 843h1M183 843h1M197 843h1M212 843h1M226 843h1M240 843h1M254 843h1M268 843h1M283 843h1M297 843h1M311 843h1M325 843h1M339 843h1M353 843h1M368 843h1M382 843h1M396 843h1M410 843h1M424 843h1M439 843h1M453 843h1M467 843h1M481 843h1M495 843h1M509 843h1M524 843h1M538 843h1M552 843h1M566 843h1M580 843h1M594 843h1M609 843h1M623 843h1M637 843h1M651 843h1M665 843h1M680 843h1M694 843h1M708 843h1M722 843h1M736 843h1M750 843h1M765 843h1M779 843h1M793 843h1M807 843h1M821 843h1M836 843h1M850 843h1M864 843h1M878 843h1M892 843h1M906 843h1M921 843h1M935 843h1M13 857h1M27 857h1M41 857h1M56 857h1M70 857h1M84 857h1M98 857h1M112 857h1M127 857h1M141 857h1M155 857h1M169 857h1M183 857h1M197 857h1M212 857h1M226 857h1M240 857h1M254 857h1M268 857h1M283 857h1M297 857h1M311 857h1M325 857h1M339 857h1M353 857h1M368 857h1M382 857h1M396 857h1M410 857h1M424 857h1M439 857h1M453 857h1M467 857h1M481 857h1M495 857h1M509 857h1M524 857h1M538 857h1M552 857h1M566 857h1M580 857h1M594 857h1M609 857h1M623 857h1M637 857h1M651 857h1M665 857h1M680 857h1M694 857h1M708 857h1M722 857h1M736 857h1M750 857h1M765 857h1M779 857h1M793 857h1M807 857h1M821 857h1M836 857h1M850 857h1M864 857h1M878 857h1M892 857h1M906 857h1M921 857h1M935 857h1M13 871h1M27 871h1M41 871h1M56 871h1M70 871h1M84 871h1M98 871h1M112 871h1M127 871h1M141 871h1M155 871h1M169 871h1M183 871h1M197 871h1M212 871h1M226 871h1M240 871h1M254 871h1M268 871h1M283 871h1M297 871h1M311 871h1M325 871h1M339 871h1M353 871h1M368 871h1M382 871h1M396 871h1M410 871h1M424 871h1M439 871h1M453 871h1M467 871h1M481 871h1M495 871h1M509 871h1M524 871h1M538 871h1M552 871h1M566 871h1M580 871h1M594 871h1M609 871h1M623 871h1M637 871h1M651 871h1M665 871h1M680 871h1M694 871h1M708 871h1M722 871h1M736 871h1M750 871h1M765 871h1M779 871h1M793 871h1M807 871h1M821 871h1M836 871h1M850 871h1M864 871h1M878 871h1M892 871h1M906 871h1M921 871h1M935 871h1" stroke="#000" stroke-width="1" shape-rendering="crispEdges" transform="translate(0 0.5)"/>
<g fill="none" stroke="#000088" stroke-width="1" stroke-linecap="square"><path d="M91.5 98.5L91.5 126.5"/><path stroke-width="1" stroke-linecap="butt" d="M91.5 98.5L119.5 112.5"/><path stroke-width="1" stroke-linecap="butt" d="M91.5 126.5L119.5 112.5"/><path d="M105.5 105.5L118.5 105.5"/><ellipse stroke-width="1.05" cx="114.5" cy="119.5" rx="3" ry="3"/><path d="M127.5 105.5L127.5 134.5"/><path stroke-width="1" stroke-linecap="butt" d="M127.5 105.5L155.5 119.5"/><path stroke-width="1" stroke-linecap="butt" d="M127.5 134.5L155.5 119.5"/><path d="M141.5 112.5L153.5 112.5"/><ellipse stroke-width="1.05" cx="149.5" cy="126.5" rx="3" ry="3"/><path d="M162.5 112.5L162.5 141.5"/><path stroke-width="1" stroke-linecap="butt" d="M162.5 112.5L190.5 126.5"/><path stroke-width="1" stroke-linecap="butt" d="M162.5 141.5L190.5 126.5"/><path d="M176.5 119.5L189.5 119.5"/><ellipse stroke-width="1.05" cx="185" cy="133.5" rx="3.5" ry="3"/><path d="M197.5 119.5L197.5 148.5"/><path stroke-width="1" stroke-linecap="butt" d="M197.5 119.5L226.5 134.5"/><path stroke-width="1" stroke-linecap="butt" d="M197.5 148.5L226.5 134.5"/><path d="M212.5 126.5L224.5 126.5"/><ellipse stroke-width="1.05" cx="220.5" cy="140.5" rx="3" ry="3"/><path d="M283.5 126.5L283.5 155.5"/><path stroke-width="1" stroke-linecap="butt" d="M283.5 126.5L311.5 141.5"/><path stroke-width="1" stroke-linecap="butt" d="M283.5 155.5L311.5 141.5"/><path d="M297.5 134.5L309.5 134.5"/><ellipse stroke-width="1.05" cx="305.5" cy="147.5" rx="3" ry="3"/><path d="M658.5 134.5L658.5 162.5"/><path stroke-width="1" stroke-linecap="butt" d="M658.5 134.5L687.5 148.5"/><path stroke-width="1" stroke-linecap="butt" d="M658.5 162.5L687.5 148.5"/><path d="M672.5 141.5L685.5 141.5"/><ellipse stroke-width="1.05" cx="681.5" cy="154.5" rx="3" ry="3"/><path d="M715.5 141.5L715.5 169.5"/><path stroke-width="1" stroke-linecap="butt" d="M715.5 141.5L743.5 155.5"/><path stroke-width="1" stroke-linecap="butt" d="M715.5 169.5L743.5 155.5"/><path d="M729.5 148.5L742.5 148.5"/><ellipse stroke-width="1.05" cx="738.5" cy="161.5" rx="3" ry="3"/><path d="M680.5 226.5L680.5 254.5"/><path stroke-width="1" stroke-linecap="butt" d="M680.5 226.5L708.5 240.5"/><path stroke-width="1" stroke-linecap="butt" d="M680.5 254.5L708.5 240.5"/><path d="M694.5 233.5L706.5 233.5"/><ellipse stroke-width="1.05" cx="702.5" cy="247" rx="3" ry="3.5"/><path d="M715.5 339.5L715.5 368.5"/><path stroke-width="1" stroke-linecap="butt" d="M715.5 339.5L743.5 353.5"/><path stroke-width="1" stroke-linecap="butt" d="M715.5 368.5L743.5 353.5"/><path d="M729.5 346.5L742.5 346.5"/><ellipse stroke-width="1.05" cx="738.5" cy="360.5" rx="3" ry="3"/><path d="M84.5 431.5L84.5 460.5"/><path stroke-width="1" stroke-linecap="butt" d="M84.5 431.5L112.5 446.5"/><path stroke-width="1" stroke-linecap="butt" d="M84.5 460.5L112.5 446.5"/><path d="M98.5 438.5L111.5 438.5"/><ellipse stroke-width="1.05" cx="107" cy="452.5" rx="3.5" ry="3"/><path d="M119.5 438.5L119.5 467.5"/><path stroke-width="1" stroke-linecap="butt" d="M119.5 438.5L148.5 453.5"/><path stroke-width="1" stroke-linecap="butt" d="M119.5 467.5L148.5 453.5"/><path d="M134.5 446.5L146.5 446.5"/><ellipse stroke-width="1.05" cx="142.5" cy="459.5" rx="3" ry="3"/><path d="M155.5 446.5L155.5 474.5"/><path stroke-width="1" stroke-linecap="butt" d="M155.5 446.5L183.5 460.5"/><path stroke-width="1" stroke-linecap="butt" d="M155.5 474.5L183.5 460.5"/><path d="M169.5 453.5L181.5 453.5"/><ellipse stroke-width="1.05" cx="177.5" cy="466.5" rx="3" ry="3"/><path d="M190.5 453.5L190.5 481.5"/><path stroke-width="1" stroke-linecap="butt" d="M190.5 453.5L219.5 467.5"/><path stroke-width="1" stroke-linecap="butt" d="M190.5 481.5L219.5 467.5"/><path d="M205.5 460.5L217.5 460.5"/><ellipse stroke-width="1.05" cx="213.5" cy="473.5" rx="3" ry="3"/><path d="M275.5 460.5L275.5 488.5"/><path stroke-width="1" stroke-linecap="butt" d="M275.5 460.5L304.5 474.5"/><path stroke-width="1" stroke-linecap="butt" d="M275.5 488.5L304.5 474.5"/><path d="M290.5 467.5L302.5 467.5"/><ellipse stroke-width="1.05" cx="298.5" cy="480.5" rx="3" ry="3"/><path d="M758.5 658.5L758.5 687.5"/><path stroke-width="1" stroke-linecap="butt" d="M758.5 658.5L786.5 672.5"/><path stroke-width="1" stroke-linecap="butt" d="M758.5 687.5L786.5 672.5"/><path d="M772.5 665.5L784.5 665.5"/><ellipse stroke-width="1.05" cx="780.5" cy="679.5" rx="3" ry="3"/><path d="M814.5 665.5L814.5 694.5"/><path stroke-width="1" stroke-linecap="butt" d="M814.5 665.5L843.5 679.5"/><path stroke-width="1" stroke-linecap="butt" d="M814.5 694.5L843.5 679.5"/><path d="M828.5 672.5L841.5 672.5"/><ellipse stroke-width="1.05" cx="837.5" cy="686.5" rx="3" ry="3"/><path d="M772.5 736.5L772.5 765.5"/><path stroke-width="1" stroke-linecap="butt" d="M772.5 736.5L800.5 750.5"/><path stroke-width="1" stroke-linecap="butt" d="M772.5 765.5L800.5 750.5"/><path d="M786.5 743.5L798.5 743.5"/><ellipse stroke-width="1.05" cx="794.5" cy="757.5" rx="3" ry="3"/><path d="M375.5 715.5L375.5 743.5"/><path stroke-width="1" stroke-linecap="butt" d="M375.5 715.5L403.5 729.5"/><path stroke-width="1" stroke-linecap="butt" d="M375.5 743.5L403.5 729.5"/><path d="M389.5 722.5L401.5 722.5"/><ellipse stroke-width="1.05" cx="397.5" cy="736.5" rx="3" ry="3"/><path d="M375.5 779.5L375.5 807.5"/><path stroke-width="1" stroke-linecap="butt" d="M375.5 779.5L403.5 793.5"/><path stroke-width="1" stroke-linecap="butt" d="M375.5 807.5L403.5 793.5"/><path d="M389.5 786.5L401.5 786.5"/><ellipse stroke-width="1.05" cx="397.5" cy="800" rx="3" ry="3.5"/><path d="M481.5 722.5L481.5 750.5"/><path stroke-width="1" stroke-linecap="butt" d="M481.5 722.5L509.5 736.5"/><path stroke-width="1" stroke-linecap="butt" d="M481.5 750.5L509.5 736.5"/><path d="M495.5 729.5L508.5 729.5"/><ellipse stroke-width="1.05" cx="504.5" cy="743.5" rx="3" ry="3"/><path d="M481.5 786.5L481.5 814.5"/><path stroke-width="1" stroke-linecap="butt" d="M481.5 786.5L509.5 800.5"/><path stroke-width="1" stroke-linecap="butt" d="M481.5 814.5L509.5 800.5"/><path d="M495.5 793.5L508.5 793.5"/><ellipse stroke-width="1.05" cx="504.5" cy="807.5" rx="3" ry="3"/><path d="M403.5 325.5L403.5 353.5"/><path stroke-width="1" stroke-linecap="butt" d="M403.5 325.5L375.5 339.5"/><path stroke-width="1" stroke-linecap="butt" d="M403.5 353.5L375.5 339.5"/><path d="M389.5 332.5L376.5 332.5"/><ellipse stroke-width="1.05" cx="380" cy="346.5" rx="3.5" ry="3"/><path d="M460.5 318.5L460.5 346.5"/><path stroke-width="1" stroke-linecap="butt" d="M460.5 318.5L431.5 332.5"/><path stroke-width="1" stroke-linecap="butt" d="M460.5 346.5L431.5 332.5"/><path d="M446.5 325.5L433.5 325.5"/><ellipse stroke-width="1.05" cx="436.5" cy="339.5" rx="3" ry="3"/><path d="M401.5 148.5L389.5 148.5L389.5 176.5L401.5 176.5"/><path stroke-width="1.15" stroke-linecap="butt" d="M401.5 148.5A10.63 14 0 0 1 401.5 176.5"/><path d="M411.3 155.5L415.5 155.5"/><ellipse stroke-width="1.05" cx="413.5" cy="169" rx="3" ry="3.5"/><path d="M396.5 176.5L396.5 183.5"/><path d="M401.5 219.5L389.5 219.5L389.5 247.5L401.5 247.5"/><path stroke-width="1.15" stroke-linecap="butt" d="M401.5 219.5A10.63 14 0 0 1 401.5 247.5"/><path d="M411.3 226.5L415.5 226.5"/><ellipse stroke-width="1.05" cx="413.5" cy="239.5" rx="3" ry="3"/><path d="M396.5 247.5L396.5 254.5"/><path d="M486.5 183.5L474.5 183.5L474.5 212.5L486.5 212.5"/><path stroke-width="1.15" stroke-linecap="butt" d="M486.5 183.5A10.63 14.5 0 0 1 486.5 212.5"/><path d="M496.3 190.5L500.5 190.5"/><ellipse stroke-width="1.05" cx="498.5" cy="204.5" rx="3" ry="3"/><path d="M481.5 212.5L481.5 219.5"/><path d="M486.5 268.5L474.5 268.5L474.5 297.5L486.5 297.5"/><path stroke-width="1.15" stroke-linecap="butt" d="M486.5 268.5A10.63 14.5 0 0 1 486.5 297.5"/><path d="M496.3 275.5L500.5 275.5"/><ellipse stroke-width="1.05" cx="498.5" cy="289.5" rx="3" ry="3"/><path d="M481.5 297.5L481.5 304.5"/><path d="M394.5 389.5L382.5 389.5L382.5 417.5L394.5 417.5"/><path stroke-width="1.15" stroke-linecap="butt" d="M394.5 389.5A10.63 14 0 0 1 394.5 417.5"/><path d="M404.3 396.5L408.5 396.5"/><ellipse stroke-width="1.05" cx="406.5" cy="410.5" rx="3" ry="3"/><path d="M389.5 417.5L389.5 424.5"/><path d="M394.5 453.5L382.5 453.5L382.5 481.5L394.5 481.5"/><path stroke-width="1.15" stroke-linecap="butt" d="M394.5 453.5A10.63 14 0 0 1 394.5 481.5"/><path d="M404.3 460.5L408.5 460.5"/><ellipse stroke-width="1.05" cx="406.5" cy="473.5" rx="3" ry="3"/><path d="M389.5 481.5L389.5 488.5"/><path d="M479.5 375.5L467.5 375.5L467.5 403.5L479.5 403.5"/><path stroke-width="1.15" stroke-linecap="butt" d="M479.5 375.5A10.63 14 0 0 1 479.5 403.5"/><path d="M489.3 382.5L493.5 382.5"/><ellipse stroke-width="1.05" cx="491.5" cy="395.5" rx="3" ry="3"/><path d="M474.5 403.5L474.5 410.5"/><path d="M479.5 446.5L467.5 446.5L467.5 474.5L479.5 474.5"/><path stroke-width="1.15" stroke-linecap="butt" d="M479.5 446.5A10.63 14 0 0 1 479.5 474.5"/><path d="M489.3 453.5L493.5 453.5"/><ellipse stroke-width="1.05" cx="491.5" cy="466.5" rx="3" ry="3"/><path d="M474.5 474.5L474.5 481.5"/><path d="M423.5 538.5L410.5 538.5L410.5 566.5L423.5 566.5"/><path stroke-width="1.15" stroke-linecap="butt" d="M423.5 538.5A10.63 14 0 0 1 423.5 566.5"/><path d="M432.3 545.5L437.5 545.5"/><ellipse stroke-width="1.05" cx="435" cy="558.5" rx="3.5" ry="3"/><path d="M417.5 566.5L417.5 573.5"/><path d="M501.5 538.5L488.5 538.5L488.5 566.5L501.5 566.5"/><path stroke-width="1.15" stroke-linecap="butt" d="M501.5 538.5A10.63 14 0 0 1 501.5 566.5"/><path d="M510.3 545.5L514.5 545.5"/><ellipse stroke-width="1.05" cx="512.5" cy="558.5" rx="3" ry="3"/><path d="M495.5 566.5L495.5 573.5"/><path d="M579.5 538.5L566.5 538.5L566.5 566.5L579.5 566.5"/><path stroke-width="1.15" stroke-linecap="butt" d="M579.5 538.5A10.63 14 0 0 1 579.5 566.5"/><path d="M588.3 545.5L592.5 545.5"/><ellipse stroke-width="1.05" cx="590.5" cy="558.5" rx="3" ry="3"/><path d="M573.5 566.5L573.5 573.5"/><path d="M671.5 538.5L658.5 538.5L658.5 566.5L671.5 566.5"/><path stroke-width="1.15" stroke-linecap="butt" d="M671.5 538.5A10.63 14 0 0 1 671.5 566.5"/><path d="M680.3 545.5L685.5 545.5"/><ellipse stroke-width="1.05" cx="683.5" cy="558.5" rx="3" ry="3"/><path d="M665.5 566.5L665.5 573.5"/><path d="M423.5 601.5L410.5 601.5L410.5 630.5L423.5 630.5"/><path stroke-width="1.15" stroke-linecap="butt" d="M423.5 601.5A10.63 14.5 0 0 1 423.5 630.5"/><path d="M432.3 609.5L437.5 609.5"/><ellipse stroke-width="1.05" cx="435" cy="622.5" rx="3.5" ry="3"/><path d="M417.5 630.5L417.5 637.5"/><path d="M501.5 601.5L488.5 601.5L488.5 630.5L501.5 630.5"/><path stroke-width="1.15" stroke-linecap="butt" d="M501.5 601.5A10.63 14.5 0 0 1 501.5 630.5"/><path d="M510.3 609.5L514.5 609.5"/><ellipse stroke-width="1.05" cx="512.5" cy="622.5" rx="3" ry="3"/><path d="M495.5 630.5L495.5 637.5"/><path d="M586.5 623.5L573.5 623.5L573.5 651.5L586.5 651.5"/><path stroke-width="1.15" stroke-linecap="butt" d="M586.5 623.5A10.63 14 0 0 1 586.5 651.5"/><path d="M595.3 630.5L600.5 630.5"/><ellipse stroke-width="1.05" cx="598" cy="644" rx="3.5" ry="3.5"/><path d="M580.5 651.5L580.5 658.5"/><path d="M664.5 630.5L651.5 630.5L651.5 658.5L664.5 658.5"/><path stroke-width="1.15" stroke-linecap="butt" d="M664.5 630.5A10.63 14 0 0 1 664.5 658.5"/><path d="M673.3 637.5L678.5 637.5"/><ellipse stroke-width="1.05" cx="676" cy="651.5" rx="3.5" ry="3"/><path d="M658.5 658.5L658.5 665.5"/><path d="M593.5 694.5L580.5 694.5L580.5 722.5L593.5 722.5"/><path stroke-width="1.15" stroke-linecap="butt" d="M593.5 694.5A10.63 14 0 0 1 593.5 722.5"/><path d="M602.3 701.5L607.5 701.5"/><ellipse stroke-width="1.05" cx="605.5" cy="714.5" rx="3" ry="3"/><path d="M587.5 722.5L587.5 729.5"/><path d="M586.5 786.5L573.5 786.5L573.5 814.5L586.5 814.5"/><path stroke-width="1.15" stroke-linecap="butt" d="M586.5 786.5A10.63 14 0 0 1 586.5 814.5"/><path d="M595.3 793.5L600.5 793.5"/><ellipse stroke-width="1.05" cx="598" cy="807.5" rx="3.5" ry="3"/><path d="M580.5 814.5L580.5 821.5"/><path d="M657.5 729.5L644.5 729.5L644.5 757.5L657.5 757.5"/><path stroke-width="1.15" stroke-linecap="butt" d="M657.5 729.5A10.63 14 0 0 1 657.5 757.5"/><path d="M666.3 736.5L670.5 736.5"/><ellipse stroke-width="1.05" cx="668.5" cy="750.5" rx="3" ry="3"/><path d="M651.5 757.5L651.5 765.5"/><path d="M664.5 332.5L651.5 332.5L651.5 360.5L664.5 360.5"/><path stroke-width="1.15" stroke-linecap="butt" d="M664.5 332.5A10.63 14 0 0 1 664.5 360.5"/><path d="M673.3 339.5L678.5 339.5"/><ellipse stroke-width="1.05" cx="676" cy="353.5" rx="3.5" ry="3"/><path d="M658.5 360.5L658.5 368.5"/><path d="M532.5 311.5L545.5 311.5L545.5 339.5L532.5 339.5"/><path stroke-width="1.15" stroke-linecap="butt" d="M532.5 311.5A10.63 14 0 0 0 532.5 339.5"/><path d="M523.7 318.5L518.5 318.5"/><ellipse stroke-width="1.05" cx="520" cy="332.5" rx="3.5" ry="3"/><path d="M538.5 339.5L538.5 346.5"/><path d="M56.5 162.5L56.5 165.5"/><path d="M56.5 194.5L56.5 197.5"/><ellipse stroke-width="1.05" cx="55.5" cy="179.5" rx="14" ry="14"/><path d="M52.5 170.5h8M56.5 166v8M52.5 188.5h8"/><path d="M56.5 311.5L56.5 314.5"/><path d="M56.5 343.5L56.5 346.5"/><ellipse stroke-width="1.05" cx="55.5" cy="328.5" rx="14" ry="14"/><path d="M52.5 319.5h8M56.5 315v8M52.5 337.5h8"/><path d="M56.5 495.5L56.5 499.5"/><path d="M56.5 527.5L56.5 531.5"/><ellipse stroke-width="1.05" cx="55.5" cy="513" rx="14" ry="13.5"/><path d="M52.5 504.5h8M56.5 500v8M52.5 521.5h8"/><path d="M807.5 162.5L807.5 169.5"/><path d="M793.5 162.5L807.5 162.5"/><path d="M807.5 134.5L807.5 126.5"/><path d="M793.5 134.5L807.5 134.5"/><path d="M793.5 158.5L793.5 165.5"/><path d="M793.5 144.5L793.5 151.5"/><path d="M793.5 130.5L793.5 137.5"/><path d="M789.5 134.5L789.5 162.5"/><path d="M786.5 162.5L789.5 162.5"/><path d="M807.5 148.5L807.5 162.5"/><path d="M793.5 148.5h3M796.5 147h5v3h-5zM801.5 148.5L807.5 148.5"/><path d="M807.5 247.5L807.5 254.5"/><path d="M793.5 247.5L807.5 247.5"/><path d="M807.5 219.5L807.5 212.5"/><path d="M793.5 219.5L807.5 219.5"/><path d="M793.5 243.5L793.5 251.5"/><path d="M793.5 229.5L793.5 236.5"/><path d="M793.5 215.5L793.5 222.5"/><path d="M789.5 219.5L789.5 247.5"/><path d="M786.5 247.5L789.5 247.5"/><path d="M807.5 233.5L807.5 247.5"/><path d="M793.5 233.5L802.5 233.5M802.5 232h4v3h-4zM806.5 233.5L807.5 233.5"/></g>
<path fill="none" stroke="#0000ff" stroke-width="1" stroke-linecap="square" d="M382.5 162.5L389.5 162.5M382.5 169.5L389.5 169.5M382.5 176.5L389.5 176.5M382.5 162.5L382.5 183.5M382.5 183.5L403.5 183.5M403.5 175.5L403.5 191.5M382.5 240.5L389.5 240.5M382.5 247.5L389.5 247.5M382.5 240.5L382.5 254.5M382.5 254.5L403.5 254.5M403.5 246.5L403.5 262.5M467.5 197.5L474.5 197.5M467.5 204.5L474.5 204.5M467.5 212.5L474.5 212.5M467.5 197.5L467.5 219.5M467.5 219.5L488.5 219.5M488.5 211.5L488.5 227.5M467.5 282.5L474.5 282.5M467.5 290.5L474.5 290.5M467.5 297.5L474.5 297.5M467.5 282.5L467.5 304.5M467.5 304.5L488.5 304.5M488.5 296.5L488.5 312.5M375.5 410.5L382.5 410.5M375.5 417.5L382.5 417.5M375.5 410.5L375.5 424.5M375.5 424.5L396.5 424.5M396.5 416.5L396.5 432.5M375.5 467.5L382.5 467.5M375.5 474.5L382.5 474.5M375.5 481.5L382.5 481.5M375.5 467.5L375.5 488.5M375.5 488.5L396.5 488.5M396.5 480.5L396.5 496.5M460.5 389.5L467.5 389.5M460.5 396.5L467.5 396.5M460.5 403.5L467.5 403.5M460.5 389.5L460.5 410.5M460.5 410.5L481.5 410.5M481.5 402.5L481.5 418.5M460.5 460.5L467.5 460.5M460.5 467.5L467.5 467.5M460.5 474.5L467.5 474.5M460.5 460.5L460.5 481.5M460.5 481.5L488.5 481.5M488.5 473.5L488.5 489.5M396.5 552.5L410.5 552.5M396.5 559.5L410.5 559.5M396.5 566.5L410.5 566.5M396.5 552.5L396.5 580.5M396.5 580.5L424.5 580.5M417.5 573.5L417.5 580.5M424.5 572.5L424.5 588.5M481.5 552.5L488.5 552.5M481.5 559.5L488.5 559.5M481.5 566.5L488.5 566.5M481.5 552.5L481.5 573.5M481.5 573.5L502.5 573.5M502.5 565.5L502.5 581.5M559.5 552.5L566.5 552.5M559.5 559.5L566.5 559.5M559.5 566.5L566.5 566.5M559.5 552.5L559.5 573.5M559.5 573.5L587.5 573.5M587.5 565.5L587.5 581.5M644.5 552.5L658.5 552.5M644.5 559.5L658.5 559.5M644.5 566.5L658.5 566.5M644.5 552.5L644.5 573.5M644.5 573.5L672.5 573.5M672.5 565.5L672.5 581.5M403.5 616.5L410.5 616.5M403.5 623.5L410.5 623.5M403.5 630.5L410.5 630.5M403.5 616.5L403.5 637.5M403.5 637.5L431.5 637.5M431.5 629.5L431.5 645.5M474.5 616.5L488.5 616.5M474.5 623.5L488.5 623.5M474.5 630.5L488.5 630.5M474.5 616.5L474.5 637.5M474.5 637.5L509.5 637.5M509.5 629.5L509.5 645.5M566.5 637.5L573.5 637.5M566.5 644.5L573.5 644.5M566.5 651.5L573.5 651.5M566.5 637.5L566.5 658.5M566.5 658.5L594.5 658.5M594.5 650.5L594.5 666.5M637.5 644.5L651.5 644.5M637.5 651.5L651.5 651.5M637.5 658.5L651.5 658.5M637.5 644.5L637.5 665.5M637.5 665.5L680.5 665.5M680.5 657.5L680.5 673.5M573.5 708.5L580.5 708.5M573.5 715.5L580.5 715.5M573.5 722.5L580.5 722.5M573.5 708.5L573.5 729.5M573.5 729.5L602.5 729.5M602.5 721.5L602.5 737.5M566.5 800.5L573.5 800.5M566.5 807.5L573.5 807.5M566.5 814.5L573.5 814.5M566.5 800.5L566.5 821.5M566.5 821.5L602.5 821.5M602.5 813.5L602.5 829.5M637.5 743.5L644.5 743.5M637.5 750.5L644.5 750.5M637.5 757.5L644.5 757.5M637.5 743.5L637.5 765.5M637.5 765.5L672.5 765.5M672.5 757.5L672.5 773.5M644.5 346.5L651.5 346.5M644.5 353.5L651.5 353.5M644.5 360.5L651.5 360.5M644.5 346.5L644.5 368.5M644.5 368.5L665.5 368.5M665.5 360.5L665.5 376.5M545.5 339.5L566.5 339.5M566.5 339.5L566.5 353.5M566.5 353.5L524.5 353.5M538.5 346.5L538.5 353.5M524.5 345.5L524.5 361.5M84.5 126.5L91.5 126.5M84.5 118.5L84.5 134.5M119.5 134.5L127.5 134.5M119.5 126.5L119.5 142.5M148.5 141.5L162.5 141.5M148.5 133.5L148.5 149.5M190.5 148.5L197.5 148.5M190.5 140.5L190.5 156.5M268.5 155.5L283.5 155.5M268.5 147.5L268.5 163.5M651.5 162.5L658.5 162.5M651.5 154.5L651.5 170.5M708.5 169.5L715.5 169.5M708.5 161.5L708.5 177.5M672.5 254.5L680.5 254.5M672.5 246.5L672.5 262.5M708.5 368.5L715.5 368.5M708.5 360.5L708.5 376.5M77.5 460.5L84.5 460.5M77.5 452.5L77.5 468.5M112.5 467.5L119.5 467.5M112.5 459.5L112.5 475.5M148.5 474.5L155.5 474.5M148.5 466.5L148.5 482.5M183.5 481.5L190.5 481.5M183.5 473.5L183.5 489.5M261.5 488.5L275.5 488.5M261.5 480.5L261.5 496.5M750.5 765.5L772.5 765.5M750.5 757.5L750.5 773.5M750.5 687.5L766.5 687.5M806.5 694.5L822.5 694.5M367.5 743.5L383.5 743.5M367.5 807.5L383.5 807.5M473.5 750.5L489.5 750.5M473.5 814.5L489.5 814.5M403.5 353.5L424.5 353.5M424.5 345.5L424.5 361.5M460.5 346.5L474.5 346.5M474.5 338.5L474.5 354.5M91.5 112.5L56.5 112.5M56.5 112.5L56.5 162.5M56.5 197.5L56.5 204.5M48.5 204.5L64.5 204.5M118.5 119.5L127.5 119.5M153.5 126.5L162.5 126.5M189.5 134.5L197.5 134.5M224.5 141.5L283.5 141.5M247.5 141.5L247.5 729.5M247.5 729.5L375.5 729.5M309.5 148.5L389.5 148.5M339.5 148.5L339.5 701.5M339.5 701.5L580.5 701.5M339.5 545.5L410.5 545.5M389.5 155.5L361.5 155.5M361.5 155.5L361.5 190.5M439.5 212.5L439.5 240.5M417.5 169.5L580.5 169.5M580.5 169.5L580.5 318.5M580.5 318.5L545.5 318.5M439.5 169.5L439.5 190.5M361.5 204.5L361.5 219.5M361.5 219.5L389.5 219.5M453.5 169.5L453.5 183.5M453.5 183.5L474.5 183.5M417.5 240.5L446.5 240.5M446.5 240.5L446.5 148.5M446.5 148.5L658.5 148.5M630.5 148.5L630.5 332.5M630.5 332.5L651.5 332.5M389.5 226.5L353.5 226.5M353.5 226.5L353.5 396.5M353.5 396.5L382.5 396.5M353.5 275.5L474.5 275.5M353.5 346.5L376.5 346.5M353.5 375.5L467.5 375.5M389.5 233.5L368.5 233.5M368.5 233.5L368.5 268.5M368.5 268.5L474.5 268.5M474.5 190.5L453.5 190.5M453.5 190.5L453.5 233.5M509.5 247.5L509.5 290.5M509.5 290.5L502.5 290.5M502.5 204.5L573.5 204.5M573.5 204.5L573.5 311.5M573.5 311.5L545.5 311.5M509.5 204.5L509.5 233.5M453.5 247.5L453.5 268.5M545.5 325.5L580.5 325.5M580.5 325.5L580.5 495.5M580.5 495.5L431.5 495.5M431.5 495.5L431.5 438.5M545.5 332.5L573.5 332.5M573.5 332.5L573.5 467.5M573.5 467.5L495.5 467.5M516.5 332.5L460.5 332.5M433.5 339.5L403.5 339.5M467.5 382.5L361.5 382.5M361.5 382.5L361.5 389.5M361.5 389.5L382.5 389.5M453.5 382.5L453.5 431.5M509.5 438.5L509.5 467.5M495.5 396.5L509.5 396.5M509.5 396.5L509.5 424.5M453.5 438.5L453.5 446.5M453.5 446.5L467.5 446.5M467.5 453.5L453.5 453.5M453.5 453.5L453.5 495.5M382.5 403.5L361.5 403.5M361.5 403.5L361.5 431.5M410.5 410.5L439.5 410.5M439.5 410.5L439.5 502.5M439.5 502.5L602.5 502.5M602.5 502.5L602.5 240.5M602.5 240.5L680.5 240.5M602.5 339.5L651.5 339.5M431.5 410.5L431.5 424.5M361.5 446.5L361.5 453.5M361.5 453.5L382.5 453.5M382.5 460.5L318.5 460.5M318.5 460.5L318.5 694.5M318.5 694.5L580.5 694.5M302.5 481.5L318.5 481.5M318.5 601.5L410.5 601.5M410.5 474.5L431.5 474.5M680.5 353.5L715.5 353.5M742.5 360.5L864.5 360.5M685.5 155.5L715.5 155.5M742.5 162.5L786.5 162.5M706.5 247.5L786.5 247.5M807.5 105.5L807.5 126.5M807.5 169.5L807.5 212.5M807.5 190.5L871.5 190.5M807.5 254.5L807.5 275.5M799.5 275.5L815.5 275.5M56.5 282.5L56.5 311.5M56.5 346.5L56.5 360.5M48.5 360.5L64.5 360.5M84.5 446.5L56.5 446.5M56.5 446.5L56.5 495.5M56.5 531.5L56.5 566.5M48.5 566.5L64.5 566.5M111.5 453.5L119.5 453.5M146.5 460.5L155.5 460.5M181.5 467.5L190.5 467.5M217.5 474.5L275.5 474.5M240.5 474.5L240.5 793.5M240.5 793.5L375.5 793.5M410.5 538.5L396.5 538.5M396.5 538.5L396.5 516.5M396.5 516.5L722.5 516.5M722.5 516.5L722.5 651.5M722.5 651.5L680.5 651.5M701.5 651.5L701.5 609.5M637.5 573.5L637.5 545.5M637.5 545.5L658.5 545.5M439.5 559.5L460.5 559.5M460.5 559.5L460.5 531.5M460.5 531.5L552.5 531.5M552.5 531.5L552.5 538.5M552.5 538.5L566.5 538.5M481.5 531.5L481.5 538.5M481.5 538.5L488.5 538.5M488.5 545.5L474.5 545.5M474.5 545.5L474.5 580.5M531.5 587.5L531.5 623.5M516.5 559.5L552.5 559.5M552.5 559.5L552.5 545.5M552.5 545.5L566.5 545.5M531.5 559.5L531.5 580.5M474.5 587.5L474.5 601.5M474.5 601.5L488.5 601.5M594.5 559.5L609.5 559.5M609.5 559.5L609.5 538.5M609.5 538.5L658.5 538.5M687.5 559.5L736.5 559.5M736.5 559.5L736.5 672.5M708.5 559.5L708.5 573.5M637.5 616.5L637.5 630.5M637.5 630.5L651.5 630.5M410.5 609.5L389.5 609.5M389.5 609.5L389.5 672.5M389.5 672.5L758.5 672.5M439.5 623.5L467.5 623.5M488.5 609.5L467.5 609.5M467.5 609.5L467.5 651.5M467.5 651.5L559.5 651.5M559.5 651.5L559.5 630.5M559.5 630.5L573.5 630.5M516.5 623.5L573.5 623.5M602.5 644.5L609.5 644.5M637.5 637.5L651.5 637.5M784.5 679.5L814.5 679.5M841.5 687.5L892.5 687.5M401.5 736.5L481.5 736.5M401.5 800.5L481.5 800.5M508.5 743.5L509.5 743.5M509.5 743.5L509.5 765.5M509.5 765.5L559.5 765.5M559.5 765.5L559.5 786.5M559.5 786.5L573.5 786.5M508.5 807.5L559.5 807.5M559.5 807.5L559.5 793.5M559.5 793.5L573.5 793.5M609.5 715.5L630.5 715.5M630.5 715.5L630.5 729.5M630.5 729.5L644.5 729.5M602.5 807.5L630.5 807.5M630.5 807.5L630.5 736.5M630.5 736.5L644.5 736.5M672.5 750.5L772.5 750.5M798.5 757.5L892.5 757.5"/>
<path fill="none" stroke="#0000ff" stroke-width="1" stroke-linecap="round" d="M403.5 175.5L411.5 183.5L403.5 191.5M403.5 246.5L411.5 254.5L403.5 262.5M488.5 211.5L496.5 219.5L488.5 227.5M488.5 296.5L496.5 304.5L488.5 312.5M396.5 416.5L404.5 424.5L396.5 432.5M396.5 480.5L404.5 488.5L396.5 496.5M481.5 402.5L489.5 410.5L481.5 418.5M488.5 473.5L496.5 481.5L488.5 489.5M424.5 572.5L432.5 580.5L424.5 588.5M502.5 565.5L510.5 573.5L502.5 581.5M587.5 565.5L595.5 573.5L587.5 581.5M672.5 565.5L680.5 573.5L672.5 581.5M431.5 629.5L439.5 637.5L431.5 645.5M509.5 629.5L517.5 637.5L509.5 645.5M594.5 650.5L602.5 658.5L594.5 666.5M680.5 657.5L688.5 665.5L680.5 673.5M602.5 721.5L610.5 729.5L602.5 737.5M602.5 813.5L610.5 821.5L602.5 829.5M672.5 757.5L680.5 765.5L672.5 773.5M665.5 360.5L673.5 368.5L665.5 376.5M524.5 345.5L516.5 353.5L524.5 361.5M84.5 118.5L76.5 126.5L84.5 134.5M119.5 126.5L111.5 134.5L119.5 142.5M148.5 133.5L140.5 141.5L148.5 149.5M190.5 140.5L182.5 148.5L190.5 156.5M268.5 147.5L260.5 155.5L268.5 163.5M651.5 154.5L643.5 162.5L651.5 170.5M708.5 161.5L700.5 169.5L708.5 177.5M672.5 246.5L664.5 254.5L672.5 262.5M708.5 360.5L700.5 368.5L708.5 376.5M77.5 452.5L69.5 460.5L77.5 468.5M112.5 459.5L104.5 467.5L112.5 475.5M148.5 466.5L140.5 474.5L148.5 482.5M183.5 473.5L175.5 481.5L183.5 489.5M261.5 480.5L253.5 488.5L261.5 496.5M750.5 757.5L742.5 765.5L750.5 773.5M750.5 687.5L758.5 695.5L766.5 687.5M806.5 694.5L814.5 702.5L822.5 694.5M367.5 743.5L375.5 751.5L383.5 743.5M367.5 807.5L375.5 815.5L383.5 807.5M473.5 750.5L481.5 758.5L489.5 750.5M473.5 814.5L481.5 822.5L489.5 814.5M424.5 345.5L432.5 353.5L424.5 361.5M474.5 338.5L482.5 346.5L474.5 354.5M48.5 204.5L56.5 212.5L64.5 204.5M361.5 190.5L439.5 212.5M439.5 190.5L361.5 204.5M453.5 233.5L509.5 247.5M509.5 233.5L453.5 247.5M453.5 431.5L509.5 438.5M509.5 424.5L453.5 438.5M361.5 431.5L431.5 438.5M431.5 424.5L361.5 446.5M799.5 275.5L807.5 283.5L815.5 275.5M48.5 360.5L56.5 368.5L64.5 360.5M48.5 566.5L56.5 574.5L64.5 566.5M701.5 609.5L637.5 573.5M474.5 580.5L531.5 587.5M531.5 580.5L474.5 587.5M708.5 573.5L637.5 616.5M609.5 644.5L637.5 637.5"/>
<g fill="#0000ff" shape-rendering="crispEdges"><rect x="380" y="167" width="5" height="5"/><rect x="380" y="174" width="5" height="5"/><rect x="394" y="181" width="5" height="5"/><rect x="380" y="245" width="5" height="5"/><rect x="394" y="252" width="5" height="5"/><rect x="465" y="202" width="5" height="5"/><rect x="465" y="210" width="5" height="5"/><rect x="479" y="217" width="5" height="5"/><rect x="465" y="288" width="5" height="5"/><rect x="465" y="295" width="5" height="5"/><rect x="479" y="302" width="5" height="5"/><rect x="373" y="415" width="5" height="5"/><rect x="387" y="422" width="5" height="5"/><rect x="373" y="472" width="5" height="5"/><rect x="373" y="479" width="5" height="5"/><rect x="387" y="486" width="5" height="5"/><rect x="458" y="394" width="5" height="5"/><rect x="458" y="401" width="5" height="5"/><rect x="472" y="408" width="5" height="5"/><rect x="458" y="465" width="5" height="5"/><rect x="458" y="472" width="5" height="5"/><rect x="472" y="479" width="5" height="5"/><rect x="394" y="557" width="5" height="5"/><rect x="394" y="564" width="5" height="5"/><rect x="415" y="578" width="5" height="5"/><rect x="479" y="557" width="5" height="5"/><rect x="479" y="564" width="5" height="5"/><rect x="493" y="571" width="5" height="5"/><rect x="557" y="557" width="5" height="5"/><rect x="557" y="564" width="5" height="5"/><rect x="571" y="571" width="5" height="5"/><rect x="642" y="557" width="5" height="5"/><rect x="642" y="564" width="5" height="5"/><rect x="663" y="571" width="5" height="5"/><rect x="401" y="621" width="5" height="5"/><rect x="401" y="628" width="5" height="5"/><rect x="415" y="635" width="5" height="5"/><rect x="472" y="621" width="5" height="5"/><rect x="472" y="628" width="5" height="5"/><rect x="493" y="635" width="5" height="5"/><rect x="564" y="642" width="5" height="5"/><rect x="564" y="649" width="5" height="5"/><rect x="578" y="656" width="5" height="5"/><rect x="635" y="649" width="5" height="5"/><rect x="635" y="656" width="5" height="5"/><rect x="656" y="663" width="5" height="5"/><rect x="571" y="713" width="5" height="5"/><rect x="571" y="720" width="5" height="5"/><rect x="585" y="727" width="5" height="5"/><rect x="564" y="805" width="5" height="5"/><rect x="564" y="812" width="5" height="5"/><rect x="578" y="819" width="5" height="5"/><rect x="635" y="748" width="5" height="5"/><rect x="635" y="755" width="5" height="5"/><rect x="649" y="763" width="5" height="5"/><rect x="642" y="351" width="5" height="5"/><rect x="642" y="358" width="5" height="5"/><rect x="656" y="366" width="5" height="5"/><rect x="536" y="351" width="5" height="5"/><rect x="245" y="139" width="5" height="5"/><rect x="337" y="146" width="5" height="5"/><rect x="337" y="543" width="5" height="5"/><rect x="437" y="167" width="5" height="5"/><rect x="451" y="167" width="5" height="5"/><rect x="437" y="238" width="5" height="5"/><rect x="628" y="146" width="5" height="5"/><rect x="351" y="273" width="5" height="5"/><rect x="351" y="344" width="5" height="5"/><rect x="351" y="373" width="5" height="5"/><rect x="451" y="266" width="5" height="5"/><rect x="507" y="202" width="5" height="5"/><rect x="451" y="493" width="5" height="5"/><rect x="429" y="472" width="5" height="5"/><rect x="507" y="465" width="5" height="5"/><rect x="451" y="380" width="5" height="5"/><rect x="429" y="408" width="5" height="5"/><rect x="600" y="337" width="5" height="5"/><rect x="316" y="479" width="5" height="5"/><rect x="316" y="599" width="5" height="5"/><rect x="805" y="188" width="5" height="5"/><rect x="238" y="472" width="5" height="5"/><rect x="699" y="649" width="5" height="5"/><rect x="479" y="529" width="5" height="5"/><rect x="529" y="557" width="5" height="5"/><rect x="706" y="557" width="5" height="5"/><rect x="734" y="670" width="5" height="5"/><rect x="465" y="621" width="5" height="5"/><rect x="529" y="621" width="5" height="5"/></g>
<g shape-rendering="crispEdges"><rect x="118" y="104" width="4" height="4" fill="#0000ff"/><rect x="119" y="105" width="2" height="2" fill="#f4f4ff"/><rect x="154" y="111" width="3" height="4" fill="#0000ff"/><rect x="155" y="112" width="1" height="2" fill="#f4f4ff"/><rect x="189" y="118" width="4" height="4" fill="#0000ff"/><rect x="190" y="119" width="2" height="2" fill="#f4f4ff"/><rect x="224" y="125" width="4" height="4" fill="#0000ff"/><rect x="225" y="126" width="2" height="2" fill="#f4f4ff"/><rect x="310" y="132" width="3" height="4" fill="#0000ff"/><rect x="311" y="133" width="1" height="2" fill="#f4f4ff"/><rect x="685" y="139" width="4" height="4" fill="#0000ff"/><rect x="686" y="140" width="2" height="2" fill="#f4f4ff"/><rect x="742" y="146" width="4" height="4" fill="#0000ff"/><rect x="743" y="147" width="2" height="2" fill="#f4f4ff"/><rect x="707" y="231" width="3" height="4" fill="#0000ff"/><rect x="708" y="232" width="1" height="2" fill="#f4f4ff"/><rect x="742" y="345" width="4" height="4" fill="#0000ff"/><rect x="743" y="346" width="2" height="2" fill="#f4f4ff"/><rect x="111" y="437" width="4" height="4" fill="#0000ff"/><rect x="112" y="438" width="2" height="2" fill="#f4f4ff"/><rect x="146" y="444" width="4" height="4" fill="#0000ff"/><rect x="147" y="445" width="2" height="2" fill="#f4f4ff"/><rect x="182" y="451" width="4" height="4" fill="#0000ff"/><rect x="183" y="452" width="2" height="2" fill="#f4f4ff"/><rect x="217" y="458" width="4" height="4" fill="#0000ff"/><rect x="218" y="459" width="2" height="2" fill="#f4f4ff"/><rect x="302" y="465" width="4" height="4" fill="#0000ff"/><rect x="303" y="466" width="2" height="2" fill="#f4f4ff"/><rect x="785" y="664" width="3" height="4" fill="#0000ff"/><rect x="786" y="665" width="1" height="2" fill="#f4f4ff"/><rect x="841" y="671" width="4" height="4" fill="#0000ff"/><rect x="842" y="672" width="2" height="2" fill="#f4f4ff"/><rect x="799" y="742" width="3" height="4" fill="#0000ff"/><rect x="800" y="743" width="1" height="2" fill="#f4f4ff"/><rect x="402" y="721" width="3" height="3" fill="#0000ff"/><rect x="403" y="722" width="1" height="1" fill="#f4f4ff"/><rect x="402" y="784" width="3" height="4" fill="#0000ff"/><rect x="403" y="785" width="1" height="2" fill="#f4f4ff"/><rect x="508" y="728" width="4" height="3" fill="#0000ff"/><rect x="509" y="729" width="2" height="1" fill="#f4f4ff"/><rect x="508" y="792" width="4" height="3" fill="#0000ff"/><rect x="509" y="793" width="2" height="1" fill="#f4f4ff"/><rect x="373" y="331" width="4" height="3" fill="#0000ff"/><rect x="374" y="332" width="2" height="1" fill="#f4f4ff"/><rect x="430" y="324" width="4" height="3" fill="#0000ff"/><rect x="431" y="325" width="2" height="1" fill="#f4f4ff"/><rect x="416" y="153" width="4" height="4" fill="#0000ff"/><rect x="417" y="154" width="2" height="2" fill="#f4f4ff"/><rect x="416" y="224" width="4" height="4" fill="#0000ff"/><rect x="417" y="225" width="2" height="2" fill="#f4f4ff"/><rect x="501" y="189" width="4" height="4" fill="#0000ff"/><rect x="502" y="190" width="2" height="2" fill="#f4f4ff"/><rect x="501" y="274" width="4" height="4" fill="#0000ff"/><rect x="502" y="275" width="2" height="2" fill="#f4f4ff"/><rect x="409" y="395" width="3" height="3" fill="#0000ff"/><rect x="410" y="396" width="1" height="1" fill="#f4f4ff"/><rect x="409" y="458" width="3" height="4" fill="#0000ff"/><rect x="410" y="459" width="1" height="2" fill="#f4f4ff"/><rect x="494" y="380" width="4" height="4" fill="#0000ff"/><rect x="495" y="381" width="2" height="2" fill="#f4f4ff"/><rect x="494" y="451" width="4" height="4" fill="#0000ff"/><rect x="495" y="452" width="2" height="2" fill="#f4f4ff"/><rect x="437" y="543" width="4" height="4" fill="#0000ff"/><rect x="438" y="544" width="2" height="2" fill="#f4f4ff"/><rect x="515" y="543" width="4" height="4" fill="#0000ff"/><rect x="516" y="544" width="2" height="2" fill="#f4f4ff"/><rect x="593" y="543" width="4" height="4" fill="#0000ff"/><rect x="594" y="544" width="2" height="2" fill="#f4f4ff"/><rect x="685" y="543" width="4" height="4" fill="#0000ff"/><rect x="686" y="544" width="2" height="2" fill="#f4f4ff"/><rect x="437" y="607" width="4" height="4" fill="#0000ff"/><rect x="438" y="608" width="2" height="2" fill="#f4f4ff"/><rect x="515" y="607" width="4" height="4" fill="#0000ff"/><rect x="516" y="608" width="2" height="2" fill="#f4f4ff"/><rect x="600" y="629" width="4" height="3" fill="#0000ff"/><rect x="601" y="630" width="2" height="1" fill="#f4f4ff"/><rect x="678" y="636" width="4" height="3" fill="#0000ff"/><rect x="679" y="637" width="2" height="1" fill="#f4f4ff"/><rect x="607" y="699" width="4" height="4" fill="#0000ff"/><rect x="608" y="700" width="2" height="2" fill="#f4f4ff"/><rect x="600" y="792" width="4" height="3" fill="#0000ff"/><rect x="601" y="793" width="2" height="1" fill="#f4f4ff"/><rect x="671" y="735" width="4" height="4" fill="#0000ff"/><rect x="672" y="736" width="2" height="2" fill="#f4f4ff"/><rect x="678" y="338" width="4" height="3" fill="#0000ff"/><rect x="679" y="339" width="2" height="1" fill="#f4f4ff"/><rect x="515" y="317" width="4" height="3" fill="#0000ff"/><rect x="516" y="318" width="2" height="1" fill="#f4f4ff"/></g>
<g font-family="'Liberation Sans', sans-serif" font-weight="bold" font-size="10.2px" fill="#000" stroke="#000" stroke-width="0.3" shape-rendering="auto" text-rendering="geometricPrecision"><text x="94.9" y="94.9" textLength="14.5" lengthAdjust="spacingAndGlyphs">A2</text><text x="130.9" y="101.9" textLength="14.5" lengthAdjust="spacingAndGlyphs">A3</text><text x="165.9" y="108.9" textLength="14.5" lengthAdjust="spacingAndGlyphs">A4</text><text x="200.9" y="115.9" textLength="14.5" lengthAdjust="spacingAndGlyphs">A5</text><text x="286.9" y="122.9" textLength="14.5" lengthAdjust="spacingAndGlyphs">A6</text><text x="661.9" y="130.9" textLength="21.6" lengthAdjust="spacingAndGlyphs">A15</text><text x="718.9" y="137.9" textLength="21.6" lengthAdjust="spacingAndGlyphs">A16</text><text x="683.9" y="222.9" textLength="21.6" lengthAdjust="spacingAndGlyphs">A36</text><text x="718.9" y="335.9" textLength="21.6" lengthAdjust="spacingAndGlyphs">A37</text><text x="87.9" y="427.9" textLength="21.6" lengthAdjust="spacingAndGlyphs">A40</text><text x="122.9" y="434.9" textLength="21.6" lengthAdjust="spacingAndGlyphs">A41</text><text x="158.9" y="442.9" textLength="21.6" lengthAdjust="spacingAndGlyphs">A42</text><text x="193.9" y="449.9" textLength="21.6" lengthAdjust="spacingAndGlyphs">A43</text><text x="278.9" y="456.9" textLength="21.6" lengthAdjust="spacingAndGlyphs">A44</text><text x="761.9" y="654.9" textLength="21.6" lengthAdjust="spacingAndGlyphs">A25</text><text x="817.9" y="661.9" textLength="21.6" lengthAdjust="spacingAndGlyphs">A26</text><text x="775.9" y="732.9" textLength="21.6" lengthAdjust="spacingAndGlyphs">A31</text><text x="378.9" y="711.9" textLength="21.6" lengthAdjust="spacingAndGlyphs">A27</text><text x="378.9" y="775.9" textLength="21.6" lengthAdjust="spacingAndGlyphs">A29</text><text x="484.9" y="718.9" textLength="21.6" lengthAdjust="spacingAndGlyphs">A28</text><text x="484.9" y="782.9" textLength="21.6" lengthAdjust="spacingAndGlyphs">A30</text><text x="399.2" y="322.1" textLength="21.6" lengthAdjust="spacingAndGlyphs" text-anchor="end">A39</text><text x="456.2" y="315.1" textLength="21.6" lengthAdjust="spacingAndGlyphs" text-anchor="end">A38</text><text x="410.2" y="147.7" textLength="14.5" lengthAdjust="spacingAndGlyphs">A1</text><text x="410.2" y="218.7" textLength="14.5" lengthAdjust="spacingAndGlyphs">A7</text><text x="495.2" y="182.7" textLength="14.5" lengthAdjust="spacingAndGlyphs">A8</text><text x="495.2" y="267.7" textLength="14.5" lengthAdjust="spacingAndGlyphs">A9</text><text x="403.2" y="388.7" textLength="21.6" lengthAdjust="spacingAndGlyphs">A10</text><text x="403.2" y="452.7" textLength="21.6" lengthAdjust="spacingAndGlyphs">A11</text><text x="488.2" y="374.7" textLength="21.6" lengthAdjust="spacingAndGlyphs">A12</text><text x="488.2" y="445.7" textLength="21.6" lengthAdjust="spacingAndGlyphs">A13</text><text x="431.2" y="537.7" textLength="21.6" lengthAdjust="spacingAndGlyphs">A17</text><text x="509.2" y="537.7" textLength="21.6" lengthAdjust="spacingAndGlyphs">A18</text><text x="587.2" y="537.7" textLength="21.6" lengthAdjust="spacingAndGlyphs">A19</text><text x="679.2" y="537.7" textLength="21.6" lengthAdjust="spacingAndGlyphs">A20</text><text x="431.2" y="600.7" textLength="21.6" lengthAdjust="spacingAndGlyphs">A21</text><text x="509.2" y="600.7" textLength="21.6" lengthAdjust="spacingAndGlyphs">A22</text><text x="594.2" y="622.7" textLength="21.6" lengthAdjust="spacingAndGlyphs">A23</text><text x="672.2" y="629.7" textLength="21.6" lengthAdjust="spacingAndGlyphs">A24</text><text x="601.2" y="693.7" textLength="21.6" lengthAdjust="spacingAndGlyphs">A32</text><text x="594.2" y="785.7" textLength="21.6" lengthAdjust="spacingAndGlyphs">A33</text><text x="665.2" y="728.7" textLength="21.6" lengthAdjust="spacingAndGlyphs">A34</text><text x="672.2" y="331.7" textLength="21.6" lengthAdjust="spacingAndGlyphs">A35</text><text x="523.9" y="310.7" textLength="21.6" lengthAdjust="spacingAndGlyphs" text-anchor="end">A14</text><text x="66.9" y="165.9" textLength="14.3" lengthAdjust="spacingAndGlyphs">V1</text><text x="66.9" y="314.9" textLength="14.3" lengthAdjust="spacingAndGlyphs">V3</text><text x="67.7" y="326.6" textLength="32" lengthAdjust="spacingAndGlyphs">{alim}</text><text x="66.9" y="498.9" textLength="14.3" lengthAdjust="spacingAndGlyphs">V2</text><text x="811.3" y="145.1" textLength="15.4" lengthAdjust="spacingAndGlyphs">M2</text><text x="811.3" y="162.1" textLength="29.4" lengthAdjust="spacingAndGlyphs">PMOS</text><text x="811.3" y="230.1" textLength="14.8" lengthAdjust="spacingAndGlyphs">M1</text><text x="811.3" y="247.1" textLength="29.4" lengthAdjust="spacingAndGlyphs">NMOS</text><text x="55.6" y="110.3" textLength="33.2" lengthAdjust="spacingAndGlyphs" text-anchor="middle">SIG_in</text><text x="55.8" y="443.9" textLength="42.7" lengthAdjust="spacingAndGlyphs" text-anchor="middle">Comp_in</text><text x="871.2" y="194.2" textLength="42.7" lengthAdjust="spacingAndGlyphs">PC2_out</text><text x="864.2" y="364.2" textLength="42.4" lengthAdjust="spacingAndGlyphs">PCP_out</text><text x="892.2" y="690.4" textLength="42.7" lengthAdjust="spacingAndGlyphs">PC3_out</text><text x="892.2" y="761.3" textLength="42.7" lengthAdjust="spacingAndGlyphs">PC1_out</text><text textLength="15.8" lengthAdjust="spacingAndGlyphs" transform="translate(810.3 104.3) rotate(-90)">Vcc</text><text textLength="15.8" lengthAdjust="spacingAndGlyphs" transform="translate(59.3 281.3) rotate(-90)">Vcc</text><text x="13.2" y="616" textLength="62.4" lengthAdjust="spacingAndGlyphs" fill="#0000dd" stroke="#0000dd">PRopagation</text><text x="79.5" y="616" textLength="11.3" lengthAdjust="spacingAndGlyphs" fill="#0000dd" stroke="#0000dd">Or</text><text x="95.4" y="616" textLength="22" lengthAdjust="spacingAndGlyphs" fill="#0000dd" stroke="#0000dd">Port</text><text x="13.2" y="628.5" textLength="60.3" lengthAdjust="spacingAndGlyphs" fill="#0000dd" stroke="#0000dd">Propagation</text><text x="77.5" y="628.5" textLength="18.6" lengthAdjust="spacingAndGlyphs" fill="#0000dd" stroke="#0000dd">And</text><text x="100.5" y="628.5" textLength="21.7" lengthAdjust="spacingAndGlyphs" fill="#0000dd" stroke="#0000dd">Port</text><text x="13.2" y="640.7" textLength="34.3" lengthAdjust="spacingAndGlyphs">.param</text><text x="51.5" y="640.7" textLength="57.5" lengthAdjust="spacingAndGlyphs">prop=100u</text><text x="112.6" y="640.7" textLength="50.4" lengthAdjust="spacingAndGlyphs">prap=50u</text><text x="166.6" y="640.7" textLength="35.1" lengthAdjust="spacingAndGlyphs">alim=5</text><text x="13.2" y="654.3" textLength="23.2" lengthAdjust="spacingAndGlyphs">.tran</text><text x="40.4" y="654.3" textLength="15.5" lengthAdjust="spacingAndGlyphs">5m</text><text x="59.3" y="654.3" textLength="35.7" lengthAdjust="spacingAndGlyphs">startup</text><text x="66.4" y="201" textLength="43.7" lengthAdjust="spacingAndGlyphs">PULSE(0</text><text x="113.9" y="201" textLength="5.7" lengthAdjust="spacingAndGlyphs">5</text><text x="123.9" y="201" textLength="25.8" lengthAdjust="spacingAndGlyphs">105u</text><text x="153.7" y="201" textLength="11.9" lengthAdjust="spacingAndGlyphs">1u</text><text x="169.6" y="201" textLength="11.9" lengthAdjust="spacingAndGlyphs">1u</text><text x="185.5" y="201" textLength="31.2" lengthAdjust="spacingAndGlyphs">700u)</text><text x="66.4" y="534.8" textLength="43.7" lengthAdjust="spacingAndGlyphs">PULSE(0</text><text x="113.9" y="534.8" textLength="5.7" lengthAdjust="spacingAndGlyphs">5</text><text x="123.9" y="534.8" textLength="25.8" lengthAdjust="spacingAndGlyphs">155u</text><text x="153.7" y="534.8" textLength="11.9" lengthAdjust="spacingAndGlyphs">1u</text><text x="169.6" y="534.8" textLength="11.9" lengthAdjust="spacingAndGlyphs">1u</text><text x="185.5" y="534.8" textLength="31.2" lengthAdjust="spacingAndGlyphs">700u)</text></g>
</svg>
<svg width="956" height="889" viewBox="0 0 956 889" style="position:absolute;left:0;top:0">
<text x="29.6" y="23.1" font-family="'Liberation Sans', sans-serif" font-size="12px" fill="#8b8b8b" textLength="165.7" lengthAdjust="spacingAndGlyphs">comparatore fase frequenza.asc</text>
<!-- app icon -->
<g stroke="#0000ff" fill="none" shape-rendering="crispEdges"><path d="M11.5 17.5h4" stroke-width="1"/><path d="M16 13v9" stroke-width="2"/></g>
<g stroke="#0000ff" fill="none"><path d="M17 16L21 10.5M17 19.5L22 25.5" stroke-width="1.1"/><path d="M18.5 22.5h2.5v-2.5" stroke-width="1.4"/></g>
<!-- minimize -->
<rect x="857.5" y="17.5" width="11" height="4" rx="1" fill="#fff" stroke="#5b6072" stroke-width="1"/>
<!-- maximize -->
<rect x="891.5" y="13.5" width="10" height="8" rx="1" fill="#fff" stroke="#5b6072" stroke-width="1"/>
<rect x="894.5" y="16.5" width="4" height="2" fill="#c6d3e4" stroke="#5b6072" stroke-width="1"/>
<!-- close -->
<path d="M927.2 15L934.2 20.4M934.2 15L927.2 20.4" stroke="#585d70" stroke-width="4.2" stroke-linecap="square" fill="none"/>
<path d="M927.2 15L934.2 20.4M934.2 15L927.2 20.4" stroke="#fff" stroke-width="2.3" stroke-linecap="square" fill="none"/>
<!-- corners -->
<path d="M0 0h3v1h-2v1h-1z" fill="#4a4a4a"/><path d="M956 0h-3v1h2v1h1z" fill="#4a4a4a"/>
</svg>
</body></html>
